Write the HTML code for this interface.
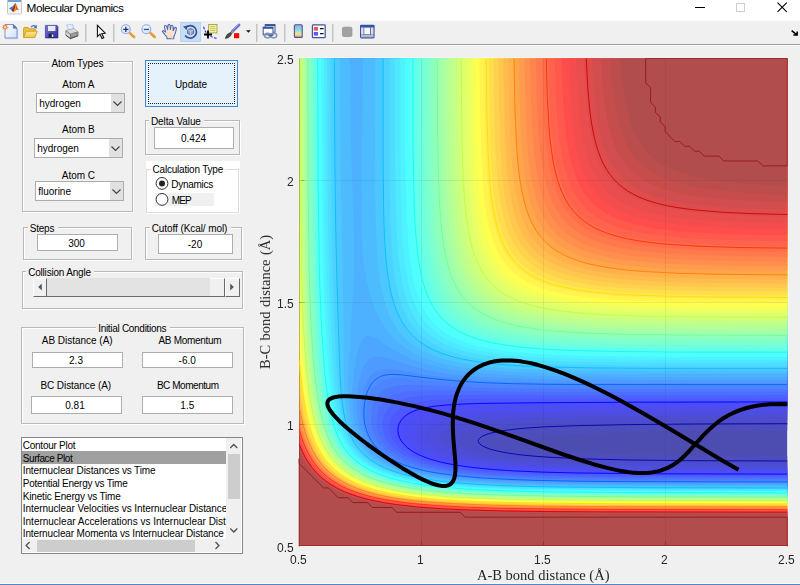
<!DOCTYPE html>
<html><head><meta charset="utf-8"><title>Molecular Dynamics</title>
<style>
html,body{margin:0;padding:0;background:#f0f0f0;}
body{width:800px;height:585px;position:relative;overflow:hidden;font-family:"Liberation Sans",sans-serif;}
.t{position:absolute;white-space:nowrap;}
.pn{position:absolute;box-sizing:border-box;border:1px solid #b8b8b8;box-shadow:1px 1px 0 #fff, inset 1px 1px 0 #fff;}
.ed{position:absolute;background:#fff;border:1px solid #abadb3;}
.pp{position:absolute;background:#fff;border:1px solid #adadad;}
.pb{position:absolute;right:0;top:0;bottom:0;width:13px;background:#e1e1e1;}
.pb svg{position:absolute;left:-1px;top:0}
.ab{position:absolute;}
</style></head><body>
<div class="ab" style="left:0;top:0;width:800px;height:21px;background:#fff"></div>
<svg class="ab" style="left:7px;top:0" width="15" height="15" viewBox="0 0 15 15">
<rect x="0.5" y="-1" width="14" height="15" rx="1" fill="#f4f4f4" stroke="#c4c8d0"/>
<rect x="1" y="0" width="13" height="2" fill="#6fa3d3"/>
<path d="M2 8.3 L5.5 6.4 L8.3 3.2 L9 5.5 L6.2 11.8 L4.6 10.2 Z" fill="#3f7fc4"/>
<path d="M8.4 3.1 C9.6 4.8 10.4 8.5 12 10.4 C10.6 9.6 9.4 9.6 8 11 C7.4 11.6 6.8 12 6.2 11.9 C6.5 9 7.4 5.6 8.4 3.1Z" fill="#e8601c"/>
<path d="M8.4 3.1 C8.9 5 8.6 8.4 6.2 11.9 C5.6 11.4 5 10.8 4.6 10.2 C6.4 8.2 7.6 5.6 8.4 3.1Z" fill="#a5281c"/>
<path d="M8.5 3.5 C9.1 5.4 9.4 8.2 8 11 C7.4 11.6 6.9 11.9 6.4 11.8 C7.9 9 8.6 6 8.5 3.5Z" fill="#f6a21e"/>
</svg>
<div class="t" style="left:26.60px;top:0.40px;font-size:11.8px;line-height:17px;color:#000;font-family:'Liberation Sans',sans-serif;letter-spacing:-0.524px;">Molecular Dynamics</div>
<div class="ab" style="left:695px;top:7px;width:10px;height:1px;background:#000"></div>
<div class="ab" style="left:736px;top:3px;width:7px;height:7px;border:1px solid #cccccc"></div>
<svg class="ab" style="left:776px;top:1px" width="12" height="12" viewBox="0 0 12 12"><path d="M1.5 1.7 L10.8 10.8 M10.8 1.7 L1.5 10.8" stroke="#000" stroke-width="1.1" fill="none"/></svg>
<div class="ab" style="left:0;top:21px;width:800px;height:23px;background:#f0f0f0"></div>
<div class="ab" style="left:0;top:44px;width:800px;height:1px;background:#a0a0a0"></div>
<div class="ab" style="left:0;top:45px;width:800px;height:1px;background:#fafafa"></div>
<div class="ab" style="left:85px;top:24px;width:1px;height:18px;background:#c3c3c3"></div>
<div class="ab" style="left:86px;top:24px;width:1px;height:18px;background:#dcdcdc"></div>
<div class="ab" style="left:113px;top:24px;width:1px;height:18px;background:#c3c3c3"></div>
<div class="ab" style="left:114px;top:24px;width:1px;height:18px;background:#dcdcdc"></div>
<div class="ab" style="left:256px;top:24px;width:1px;height:18px;background:#c3c3c3"></div>
<div class="ab" style="left:257px;top:24px;width:1px;height:18px;background:#dcdcdc"></div>
<div class="ab" style="left:284px;top:24px;width:1px;height:18px;background:#c3c3c3"></div>
<div class="ab" style="left:285px;top:24px;width:1px;height:18px;background:#dcdcdc"></div>
<div class="ab" style="left:332px;top:24px;width:1px;height:18px;background:#c3c3c3"></div>
<div class="ab" style="left:333px;top:24px;width:1px;height:18px;background:#dcdcdc"></div>
<div class="ab" style="left:180px;top:22px;width:20px;height:19px;background:#c5def5;border:1px solid #b2d5f3;box-sizing:border-box;width:21px;height:20px"></div>
<svg class="ab" style="left:0;top:0" width="400" height="46" viewBox="0 0 400 46">
<defs>
<linearGradient id="gpage" x1="0" y1="0" x2="1" y2="1"><stop offset="0" stop-color="#ffffff"/><stop offset="1" stop-color="#cfe0f6"/></linearGradient>
<linearGradient id="gfold" x1="0" y1="0" x2="0" y2="1"><stop offset="0" stop-color="#fbe9a0"/><stop offset="1" stop-color="#f2c53a"/></linearGradient>
<linearGradient id="gsave" x1="0" y1="0" x2="1" y2="1"><stop offset="0" stop-color="#7a78d8"/><stop offset="1" stop-color="#2e2a9a"/></linearGradient>
<linearGradient id="gcb" x1="0" y1="0" x2="0" y2="1"><stop offset="0" stop-color="#a9a4ea"/><stop offset="0.4" stop-color="#86dde0"/><stop offset="0.72" stop-color="#f1e88e"/><stop offset="1" stop-color="#f0a070"/></linearGradient>
<radialGradient id="glens" cx="0.4" cy="0.35" r="0.7"><stop offset="0" stop-color="#f4fbff"/><stop offset="1" stop-color="#bfe4f4"/></radialGradient>
</defs>
<!-- new -->
<path d="M5 24.5 H13.3 L17 28.2 V38 H5 Z" fill="url(#gpage)" stroke="#7f93cc" stroke-width="1"/>
<path d="M13.3 24.5 V28.2 H17 Z" fill="#5e6fb5" stroke="#5e6fb5" stroke-width="0.6"/>
<path d="M5 38.6 H17.6 V28.6" fill="none" stroke="#a9b4d8" stroke-width="1"/>
<path d="M5.2 23.6 L5.9 25.7 L7.8 24.6 L6.9 26.6 L9 27.2 L6.9 27.9 L7.8 29.8 L5.9 28.8 L5.2 30.8 L4.5 28.8 L2.6 29.8 L3.5 27.9 L1.5 27.2 L3.5 26.6 L2.6 24.6 L4.5 25.7Z" fill="#f0784a"/>
<circle cx="5.2" cy="27.2" r="1.3" fill="#f8d860"/>
<!-- open -->
<path d="M23.6 37.4 V28.6 Q23.6 27.4 24.8 27.4 H28 L29.4 28.8 H34.6 Q35.6 28.8 35.6 29.8 V31" fill="#f0c23c" stroke="#c89a28" stroke-width="0.9"/>
<path d="M23.6 37.6 L26.2 31.2 H37.2 L34.8 37.6 Z" fill="url(#gfold)" stroke="#c89a28" stroke-width="0.9"/>
<path d="M31 27.2 Q33.4 24.4 35.8 26.6" fill="none" stroke="#5078c0" stroke-width="1.3"/>
<path d="M36.9 25 L36.6 28.8 L33.6 27.3 Z" fill="#3c64b4"/>
<!-- save -->
<path d="M45.4 25.4 H57 L58 26.4 V38 H45.4 Z" fill="url(#gsave)" stroke="#2a2890" stroke-width="0.6"/>
<rect x="48" y="26" width="7.4" height="5" fill="#e8ecf6"/>
<rect x="48.6" y="33.6" width="5.4" height="4" fill="#20204c"/>
<rect x="51.8" y="34.4" width="1.6" height="2.6" fill="#e0e4f0"/>
<!-- print -->
<path d="M66.5 24.8 L72.6 24.4 L74 28.8 L68.4 30.6 Z" fill="#c4dcfa" stroke="#9ab4e0" stroke-width="0.5"/>
<path d="M67.6 25.4 L71.8 25.2 L72.8 28.4 L68.8 29.6 Z" fill="#e6f0fe"/>
<path d="M65.8 30.6 L68.2 29.9 L73.9 28.4 L78.1 31.9 L70.5 34.2 Z" fill="#dadada" stroke="#8c8c8c" stroke-width="0.5"/>
<path d="M65.8 30.6 L70.5 34.2 V38.6 L65.8 35.2 Z" fill="#c2c2c2" stroke="#6a6a6a" stroke-width="0.6"/>
<path d="M70.5 34.2 L78.1 31.9 V35.7 L70.5 38.6 Z" fill="#9e9e9e" stroke="#5c5c5c" stroke-width="0.6"/>
<path d="M66.4 33 L70 35.8 V36.8 L66.4 34 Z" fill="#f4f4f4"/>
<path d="M65.8 35.2 L70.5 38.6 L78.1 35.7" fill="none" stroke="#4a4a4a" stroke-width="1"/>
<path d="M71.4 37 L73 36.4" stroke="#7a84d8" stroke-width="1"/>
<circle cx="76.2" cy="33.4" r="0.7" fill="#58a858"/>
<!-- pointer -->
<path d="M97.4 25.4 V36.6 L100 34.2 L102 38.6 L103.8 37.8 L101.8 33.6 L105.2 33.2 Z" fill="#fafafa" stroke="#111" stroke-width="1.1" stroke-linejoin="miter"/>
<!-- zoom in -->
<path d="M129.2 32.4 L134.2 37" stroke="#e9a23c" stroke-width="2.6" stroke-linecap="round"/>
<path d="M129.8 33.9 L133.4 37.4" stroke="#c88428" stroke-width="0.7"/>
<circle cx="125.8" cy="29.2" r="4.5" fill="url(#glens)" stroke="#a7a5e4" stroke-width="1.1"/>
<path d="M123.2 29.4 H128.4 M125.8 26.8 V32" stroke="#24307c" stroke-width="1.3"/>
<!-- zoom out -->
<path d="M149.8 32.4 L154.8 37" stroke="#e9a23c" stroke-width="2.6" stroke-linecap="round"/>
<path d="M150.4 33.9 L154 37.4" stroke="#c88428" stroke-width="0.7"/>
<circle cx="146.4" cy="29.2" r="4.5" fill="url(#glens)" stroke="#a7a5e4" stroke-width="1.1"/>
<path d="M143.8 29.4 H149" stroke="#3a4a94" stroke-width="1.3"/>
<!-- pan hand -->
<path d="M167 38.7 V37 L164.6 34.4 L162.5 31.6 Q162.2 30.6 163.4 30.6 L165.6 32 L164.4 27 Q164.4 25.4 165.6 25.5 Q166.5 25.5 166.8 26.8 L167.6 29.4 L168 25.6 Q168.2 24.3 169.2 24.4 Q170.1 24.5 170.2 25.8 L170.4 29.2 L170.9 26.4 Q171.2 25.1 172.2 25.3 Q173.2 25.5 173.1 26.8 L173.2 30.4 L174.5 28 Q175.2 27 176 27.5 Q176.7 28 176.3 29.4 L175.2 33.6 L173.8 36.8 V38.7 Z" fill="#fbe2c6" stroke="#4666c6" stroke-width="1.05" stroke-linejoin="round"/>
<path d="M170 34 L173.6 38.4 H171 Z" fill="#f2cda6"/>
<path d="M167.5 26.5 V30.2 M170.5 26 V30 M173.4 27.4 V31" stroke="#4666c6" stroke-width="0.9" stroke-opacity="0.9"/>
<!-- rotate 3d -->
<path d="M185.6 27.8 A6.2 6.2 0 1 1 185.2 35.4" fill="none" stroke="#3a4c8c" stroke-width="1.7"/>
<path d="M183 26.6 L187.6 25.4 L186.8 30 Z" fill="#3a4c8c"/>
<path d="M190.6 28.6 L193.6 29.8 V33.4 L190.6 34.8 L187.6 33.4 V29.8 Z" fill="#8a9cc8" stroke="#4a5c9c" stroke-width="0.8"/>
<path d="M187.6 29.8 L190.6 31.2 L193.6 29.8 M190.6 31.2 V34.8" fill="none" stroke="#dfe6f4" stroke-width="0.8"/>
<!-- data cursor -->
<path d="M203.6 26.6 Q205 32 208 34.6 Q212 37.6 216.8 38.4" fill="none" stroke="#2a2aff" stroke-width="1.1" stroke-dasharray="2.6 1.4"/>
<rect x="208.6" y="24.5" width="8.4" height="8.4" fill="#f2f2a6" stroke="#a3a33e" stroke-width="0.9"/>
<path d="M210.2 26.6 H215.4 M210.2 28.6 H215.4 M210.2 30.6 H215.4" stroke="#b5b55a" stroke-width="0.8"/>
<path d="M204 34.5 H212 M208 30.6 V38.6" stroke="#000" stroke-width="1.8"/>
<!-- brush -->
<path d="M239 25 L232.2 31.6" stroke="#6a6ed6" stroke-width="2.8" stroke-linecap="round"/>
<path d="M238.4 24.6 L231.8 31" stroke="#a9acec" stroke-width="0.8"/>
<path d="M232.8 30.4 L230.4 32.6 L231.8 33.8 L233.8 31.6Z" fill="#9a9a9a" stroke="#6c6c6c" stroke-width="0.5"/>
<path d="M230.6 32.4 Q226.4 33.6 225.2 38.4 Q229.8 38.6 231.8 33.6 Z" fill="#4a4a4a" stroke="#2c2c2c" stroke-width="0.5"/>
<rect x="234" y="33.2" width="5.2" height="5" fill="#ff0000"/>
<path d="M246 30.2 H250.8 L248.4 32.8 Z" fill="#111"/>
<!-- link -->
<rect x="265.2" y="24.6" width="9.8" height="7.6" fill="#fff" stroke="#3a5296" stroke-width="1"/>
<rect x="265.2" y="24.4" width="9.8" height="1.8" fill="#3a5296"/>
<rect x="263.2" y="27.2" width="9.8" height="7.6" fill="#fdfdfd" stroke="#3a5296" stroke-width="1"/>
<rect x="263.2" y="27" width="9.8" height="1.8" fill="#3a5296"/>
<ellipse cx="267.6" cy="35.6" rx="3.2" ry="2.3" fill="none" stroke="#7c92b6" stroke-width="1.5"/>
<ellipse cx="273.6" cy="35.6" rx="3.2" ry="2.3" fill="none" stroke="#7c92b6" stroke-width="1.5"/>
<path d="M268.6 35.6 H272.8" stroke="#4a5e86" stroke-width="1.4"/>
<!-- colorbar -->
<rect x="294.4" y="24.8" width="7.8" height="12.6" rx="1" fill="url(#gcb)" stroke="#42549a" stroke-width="1.1"/>
<!-- legend -->
<rect x="312.4" y="24.9" width="12.8" height="12.8" rx="0.8" fill="#fafafa" stroke="#42549a" stroke-width="1.2"/>
<rect x="313.8" y="27" width="4.2" height="3.6" fill="#e65a5a"/>
<rect x="313.8" y="32" width="4.2" height="3.6" fill="#5c5cec"/>
<path d="M320 28.6 H323.6 M320 33.6 H323.6" stroke="#111" stroke-width="1.1"/>
<!-- gray square -->
<rect x="342.5" y="27.2" width="9.4" height="9.2" rx="1.2" fill="#a2a2a2" stroke="#939393" stroke-width="0.8"/>
<!-- window -->
<rect x="360.6" y="25.4" width="13.4" height="12.4" rx="0.8" fill="#f7f7f7" stroke="#3452a4" stroke-width="1.2"/>
<rect x="360.4" y="25" width="13.8" height="2.6" fill="#3452a4"/>
<path d="M363.8 27.6 V34.6 M370.6 27.6 V34.6 M361 34.8 H373.6" stroke="#3452a4" stroke-width="0.9"/>
<rect x="361.4" y="35.2" width="11.8" height="1.8" fill="#b8b8b8"/>
<rect x="361.3" y="27.8" width="2" height="6.6" fill="#dcdcdc"/>
<rect x="371.1" y="27.8" width="2" height="6.6" fill="#dcdcdc"/>
</svg>

<div class="pn" style="left:22px;top:61px;width:111px;height:151px;"></div>
<div style="position:absolute;left:49.4px;top:56px;width:57.5px;height:12px;background:#f0f0f0"></div>
<div class="t" style="left:51.40px;top:57.30px;font-size:10px;line-height:14px;color:#000;font-family:'Liberation Sans',sans-serif;letter-spacing:-0.062px;">Atom Types</div>
<div class="t" style="left:62.28px;top:78.10px;font-size:10px;line-height:14px;color:#000;font-family:'Liberation Sans',sans-serif;letter-spacing:0.000px;">Atom A</div>
<div class="pp" style="left:36px;top:93px;width:87px;height:18px"><div class="pb"><svg width="15" height="18" viewBox="0 0 15 18"><path d="M3.5 7.5 L7.5 11.5 L11.5 7.5" fill="none" stroke="#444" stroke-width="1.2"/></svg></div></div><div class="t" style="left:39.20px;top:97.30px;font-size:10px;line-height:14px;color:#000;font-family:'Liberation Sans',sans-serif;letter-spacing:0.000px;">hydrogen</div>
<div class="t" style="left:62.01px;top:123.10px;font-size:10px;line-height:14px;color:#000;font-family:'Liberation Sans',sans-serif;letter-spacing:0.000px;">Atom B</div>
<div class="pp" style="left:34px;top:138px;width:87px;height:18px"><div class="pb"><svg width="15" height="18" viewBox="0 0 15 18"><path d="M3.5 7.5 L7.5 11.5 L11.5 7.5" fill="none" stroke="#444" stroke-width="1.2"/></svg></div></div><div class="t" style="left:37.20px;top:142.30px;font-size:10px;line-height:14px;color:#000;font-family:'Liberation Sans',sans-serif;letter-spacing:0.000px;">hydrogen</div>
<div class="t" style="left:61.73px;top:168.60px;font-size:10px;line-height:14px;color:#000;font-family:'Liberation Sans',sans-serif;letter-spacing:0.000px;">Atom C</div>
<div class="pp" style="left:35px;top:181px;width:87px;height:18px"><div class="pb"><svg width="15" height="18" viewBox="0 0 15 18"><path d="M3.5 7.5 L7.5 11.5 L11.5 7.5" fill="none" stroke="#444" stroke-width="1.2"/></svg></div></div><div class="t" style="left:38.20px;top:185.30px;font-size:10px;line-height:14px;color:#000;font-family:'Liberation Sans',sans-serif;letter-spacing:0.000px;">fluorine</div>
<div class="ab" style="left:145px;top:60px;width:91px;height:45px;border:1px solid #3c8ad8;background:#e5f1fb"><div style="position:absolute;left:2px;top:2px;right:2px;bottom:2px;border:1px dotted #222"></div></div>
<div class="t" style="left:174.88px;top:78.10px;font-size:10px;line-height:14px;color:#000;font-family:'Liberation Sans',sans-serif;letter-spacing:0.000px;">Update</div>
<div class="pn" style="left:145px;top:120px;width:95px;height:35px;"></div>
<div style="position:absolute;left:149.0px;top:115px;width:55.3px;height:12px;background:#f0f0f0"></div>
<div class="t" style="left:151.00px;top:115.30px;font-size:10px;line-height:14px;color:#000;font-family:'Liberation Sans',sans-serif;letter-spacing:-0.105px;">Delta Value</div>
<div class="ed" style="left:154px;top:127px;width:78px;height:20px"></div><div class="t" style="left:180.99px;top:132.30px;font-size:10px;line-height:14px;color:#000;font-family:'Liberation Sans',sans-serif;letter-spacing:0.000px;">0.424</div>
<div class="ab" style="left:146px;top:161px;width:94px;height:53px;background:#fff"></div>
<div class="ab" style="left:155px;top:193px;width:59px;height:13px;background:#f0f0f0"></div>
<div class="pn" style="left:146px;top:169px;width:93px;height:44px;box-shadow:none;border-color:#dcdcdc"></div>
<div class="ab" style="left:150.5px;top:163px;width:74px;height:12px;background:#fff"></div>
<div class="t" style="left:152.50px;top:162.80px;font-size:10px;line-height:14px;color:#000;font-family:'Liberation Sans',sans-serif;letter-spacing:-0.203px;">Calculation Type</div>
<svg class="ab" style="left:155px;top:176px" width="14" height="30" viewBox="0 0 14 30"><circle cx="7" cy="7.4" r="5.9" fill="#fff" stroke="#333" stroke-width="1"/><circle cx="7" cy="7.4" r="3" fill="#222"/><circle cx="7" cy="23.4" r="5.9" fill="#fff" stroke="#333" stroke-width="1"/></svg>
<div class="t" style="left:171.30px;top:177.80px;font-size:10px;line-height:14px;color:#000;font-family:'Liberation Sans',sans-serif;letter-spacing:-0.275px;">Dynamics</div>
<div class="t" style="left:171.70px;top:193.80px;font-size:10px;line-height:14px;color:#000;font-family:'Liberation Sans',sans-serif;letter-spacing:-0.890px;">MEP</div>
<div class="pn" style="left:23px;top:227px;width:109px;height:33px;"></div>
<div style="position:absolute;left:27.8px;top:222px;width:29.9px;height:12px;background:#f0f0f0"></div>
<div class="t" style="left:29.80px;top:222.40px;font-size:10px;line-height:14px;color:#000;font-family:'Liberation Sans',sans-serif;letter-spacing:-0.234px;">Steps</div>
<div class="ed" style="left:37px;top:234px;width:79px;height:15px"></div><div class="t" style="left:68.16px;top:236.80px;font-size:10px;line-height:14px;color:#000;font-family:'Liberation Sans',sans-serif;letter-spacing:0.000px;">300</div>
<div class="pn" style="left:145px;top:227px;width:97px;height:33px;"></div>
<div style="position:absolute;left:149.7px;top:222px;width:81.1px;height:12px;background:#f0f0f0"></div>
<div class="t" style="left:151.70px;top:222.00px;font-size:10px;line-height:14px;color:#000;font-family:'Liberation Sans',sans-serif;letter-spacing:-0.081px;">Cutoff (Kcal/ mol)</div>
<div class="ed" style="left:158px;top:234px;width:73px;height:18px"></div><div class="t" style="left:187.77px;top:238.30px;font-size:10px;line-height:14px;color:#000;font-family:'Liberation Sans',sans-serif;letter-spacing:0.000px;">-20</div>
<div class="pn" style="left:22px;top:271px;width:221px;height:38px;"></div>
<div style="position:absolute;left:26.2px;top:266px;width:68.1px;height:12px;background:#f0f0f0"></div>
<div class="t" style="left:28.20px;top:266.30px;font-size:10px;line-height:14px;color:#000;font-family:'Liberation Sans',sans-serif;letter-spacing:-0.200px;">Collision Angle</div>
<div class="ab" style="left:33px;top:278px;width:207px;height:19px;background:#e3e3e3;border-bottom:1px solid #696969;box-sizing:border-box"></div>
<div class="ab" style="left:33px;top:278px;width:14px;height:19px;background:#f0f0f0;border-right:1px solid #696969;border-bottom:1px solid #696969;border-left:1px solid #fff;border-top:1px solid #fff;box-sizing:border-box"></div>
<div class="ab" style="left:210px;top:278px;width:15px;height:19px;background:#f0f0f0;border-right:1px solid #696969;border-bottom:1px solid #696969;border-top:1px solid #fff;box-sizing:border-box"></div>
<div class="ab" style="left:225px;top:278px;width:15px;height:19px;background:#f0f0f0;border-right:1px solid #696969;border-bottom:1px solid #696969;border-left:1px solid #fff;border-top:1px solid #fff;box-sizing:border-box"></div>
<svg class="ab" style="left:33px;top:278px" width="207" height="19" viewBox="0 0 207 19"><path d="M8.8 5.5 L5.2 9 L8.8 12.5Z M197.2 5.5 L200.8 9 L197.2 12.5Z" fill="#555"/></svg>
<div class="pn" style="left:21px;top:327px;width:223px;height:97px;"></div>
<div style="position:absolute;left:96.2px;top:322px;width:73.5px;height:12px;background:#f0f0f0"></div>
<div class="t" style="left:98.20px;top:321.60px;font-size:10px;line-height:14px;color:#000;font-family:'Liberation Sans',sans-serif;letter-spacing:-0.299px;">Initial Conditions</div>
<div class="t" style="left:41.76px;top:334.10px;font-size:10px;line-height:14px;color:#000;font-family:'Liberation Sans',sans-serif;letter-spacing:-0.016px;">AB Distance (A)</div>
<div class="t" style="left:158.51px;top:334.10px;font-size:10px;line-height:14px;color:#000;font-family:'Liberation Sans',sans-serif;letter-spacing:-0.312px;">AB Momentum</div>
<div class="ed" style="left:32px;top:352px;width:89px;height:14px"></div><div class="t" style="left:69.05px;top:354.30px;font-size:10px;line-height:14px;color:#000;font-family:'Liberation Sans',sans-serif;letter-spacing:0.000px;">2.3</div>
<div class="ed" style="left:142px;top:352px;width:89px;height:14px"></div><div class="t" style="left:178.58px;top:354.30px;font-size:10px;line-height:14px;color:#000;font-family:'Liberation Sans',sans-serif;letter-spacing:0.000px;">-6.0</div>
<div class="t" style="left:40.38px;top:379.10px;font-size:10px;line-height:14px;color:#000;font-family:'Liberation Sans',sans-serif;letter-spacing:-0.066px;">BC Distance (A)</div>
<div class="t" style="left:156.88px;top:379.10px;font-size:10px;line-height:14px;color:#000;font-family:'Liberation Sans',sans-serif;letter-spacing:-0.453px;">BC Momentum</div>
<div class="ed" style="left:31px;top:396px;width:89px;height:16px"></div><div class="t" style="left:65.27px;top:399.30px;font-size:10px;line-height:14px;color:#000;font-family:'Liberation Sans',sans-serif;letter-spacing:0.000px;">0.81</div>
<div class="ed" style="left:142px;top:396px;width:89px;height:16px"></div><div class="t" style="left:180.35px;top:399.30px;font-size:10px;line-height:14px;color:#000;font-family:'Liberation Sans',sans-serif;letter-spacing:0.000px;">1.5</div>
<div class="ab" style="left:21px;top:437px;width:220px;height:115px;background:#fff;border:1px solid #828790"></div>
<div class="ab" style="left:22px;top:451px;width:204px;height:12.5px;background:#a0a0a0"></div>
<div class="ab" style="left:22px;top:438px;width:204px;height:101px;overflow:hidden">
<div class="t" style="left:0.80px;top:1.20px;font-size:10px;line-height:14px;color:#000;font-family:'Liberation Sans',sans-serif;letter-spacing:-0.257px;">Contour Plot</div>
<div class="t" style="left:0.80px;top:13.80px;font-size:10px;line-height:14px;color:#000;font-family:'Liberation Sans',sans-serif;letter-spacing:-0.415px;">Surface Plot</div>
<div class="t" style="left:0.80px;top:26.40px;font-size:10px;line-height:14px;color:#000;font-family:'Liberation Sans',sans-serif;letter-spacing:-0.137px;">Internuclear Distances vs Time</div>
<div class="t" style="left:0.80px;top:39.00px;font-size:10px;line-height:14px;color:#000;font-family:'Liberation Sans',sans-serif;letter-spacing:-0.246px;">Potential Energy vs Time</div>
<div class="t" style="left:0.80px;top:51.60px;font-size:10px;line-height:14px;color:#000;font-family:'Liberation Sans',sans-serif;letter-spacing:-0.178px;">Kinetic Energy vs Time</div>
<div class="t" style="left:0.80px;top:64.20px;font-size:10px;line-height:14px;color:#000;font-family:'Liberation Sans',sans-serif;letter-spacing:-0.071px;">Internuclear Velocities vs Internuclear Distance</div>
<div class="t" style="left:0.80px;top:76.80px;font-size:10px;line-height:14px;color:#000;font-family:'Liberation Sans',sans-serif;letter-spacing:-0.008px;">Internuclear Accelerations vs Internuclear Distance</div>
<div class="t" style="left:0.80px;top:89.40px;font-size:10px;line-height:14px;color:#000;font-family:'Liberation Sans',sans-serif;letter-spacing:-0.141px;">Internuclear Momenta vs Internuclear Distance</div>
</div>
<div class="ab" style="left:226px;top:438px;width:15px;height:114px;background:#f0f0f0"></div>
<div class="ab" style="left:228px;top:454px;width:12px;height:45px;background:#cdcdcd"></div>
<svg class="ab" style="left:226px;top:438px" width="15" height="101" viewBox="0 0 15 101"><path d="M4.3 10 L7.8 6.5 L11.3 10 M4.3 90.5 L7.8 94 L11.3 90.5" fill="none" stroke="#505050" stroke-width="1.3"/></svg>
<div class="ab" style="left:22px;top:539px;width:204px;height:13px;background:#f0f0f0"></div>
<div class="ab" style="left:37px;top:540px;width:158px;height:12px;background:#cdcdcd"></div>
<svg class="ab" style="left:22px;top:539px" width="204" height="13" viewBox="0 0 204 13"><path d="M7.6 3 L4.1 6.5 L7.6 10 M193.5 3 L197 6.5 L193.5 10" fill="none" stroke="#505050" stroke-width="1.3"/></svg>
<svg class="ab" style="left:0;top:0" width="800" height="585" viewBox="0 0 800 585">
<defs><clipPath id="axclip"><rect x="299" y="58" width="489" height="488"/></clipPath></defs>
<rect x="299" y="57.6" width="489.4" height="489.4" fill="#f7f7f7"/>
<g clip-path="url(#axclip)">
<rect x="299.2" y="58.5" width="488" height="488" fill="#4d4db1"/>
<path fill="#4d4dbc" fill-rule="evenodd" d="M299.2 546.5l488 0l0 -90.8l-70.8 -0.3l-51.2 -0.5l-46.4 -1l-30.5 -1.3l-20.7 -1.4l-11 -1.1l-9 -1.2l-6.6 -1.2l-4.8 -1.2l-3.2 -1.3l-2 -1.2l-0.6 -1.2l0.5 -1.2l1.3 -0.9l3.7 -1.5l5.3 -1.3l5.7 -0.9l17 -1.9l25.7 -1.6l30.5 -1.1l40.2 -0.8l54.9 -0.6l72 -0.3l0 -372.2l-488 0l0 488z"/>
<path fill="#4d4dc7" fill-rule="evenodd" d="M299.2 546.5l488 0l0 -86.2l-93.9 -0.4l-58.6 -0.6l-45.1 -1.1l-20.7 -0.8l-15.9 -0.8l-17.1 -1.3l-12.2 -1.3l-10.7 -1.4l-8.8 -1.7l-8.1 -2l-6.4 -2.4l-2.2 -1.3l-1.5 -1.2l-1 -1.2l-0.4 -1.2l0.1 -1.2l0.7 -1.3l1.4 -1.2l2 -1.2l5.6 -2.1l6.1 -1.6l7.3 -1.3l11 -1.4l11 -1.1l15.8 -1.1l34.2 -1.4l47.6 -1l65.9 -0.6l93.9 -0.4l0 -366.2l-488 0l0 488z"/>
<path fill="#4d4dd2" fill-rule="evenodd" d="M299.2 546.5l488 0l0 -82.9l-102.5 -0.3l-69.5 -0.8l-51.3 -1.3l-34.1 -1.9l-17.1 -1.5l-13.1 -1.6l-14.2 -2.4l-9.8 -2.5l-7 -2.4l-2.6 -1.2l-4.1 -2.5l-2.4 -2.4l-0.7 -1.2l-0.4 -1.2l0 -1.3l0.3 -1.2l1.5 -2.1l1.9 -1.5l1.8 -1.1l6.1 -2.6l6.1 -1.7l9.8 -1.9l9.5 -1.3l12.4 -1.2l17.1 -1.2l35.4 -1.5l51.2 -1l70.8 -0.6l104.9 -0.3l0 -361.4l-488 0l0 488z"/>
<path fill="#4d4dde" fill-rule="evenodd" d="M299.2 546.5l488 0l0 -80.1l-114.7 -0.4l-69.5 -0.8l-26.9 -0.5l-25.6 -0.9l-20.7 -1.1l-15.9 -1.1l-17.7 -1.7l-15.2 -2.2l-13.4 -2.7l-8.6 -2.4l-3.6 -1.3l-5.4 -2.4l-2.2 -1.2l-3.5 -2.5l-1.4 -1.2l-1.9 -2.4l-0.5 -1.2l-0.5 -2.5l0.5 -2.4l0.6 -1.2l1 -1.3l2.3 -2l2.5 -1.6l2.5 -1.2l6.8 -2.5l8.9 -2.1l9.8 -1.6l12.2 -1.4l15.8 -1.3l17.1 -0.9l20.8 -0.8l52.4 -1l75.8 -0.6l118.2 -0.4l0 -357.1l-488 0l0 488z"/>
<path fill="#4d4de9" fill-rule="evenodd" d="M299.2 546.5l488 0l0 -77.8l-118.3 -0.3l-76.9 -0.9l-26.8 -0.6l-26.2 -0.9l-22.3 -1.2l-15.7 -1.3l-15.1 -1.6l-14.7 -2.1l-12.2 -2.5l-6.1 -1.6l-6.1 -1.9l-8.6 -3.7l-5.9 -3.6l-2.7 -2.5l-2 -2.4l-1.2 -2.5l-0.5 -2.4l0.2 -2.4l0.4 -1.3l1.3 -2.4l1.9 -2.1l2 -1.6l2.9 -1.7l6.1 -2.6l7.3 -2.2l10.3 -2l11.7 -1.5l15.9 -1.4l17 -1l20.8 -0.7l54.9 -1.1l80.5 -0.6l128.1 -0.4l0 -353.2l-488 0l0 488z"/>
<path fill="#4d4df4" fill-rule="evenodd" d="M299.2 546.5l488 0l0 -75.7l-124.4 -0.3l-77 -0.9l-30.4 -0.7l-24.4 -0.9l-22 -1.3l-19.5 -1.6l-17.1 -2l-14.6 -2.5l-13 -3.2l-10.6 -3.6l-7.4 -3.7l-3.8 -2.4l-2.9 -2.5l-2.3 -2.4l-1.6 -2.4l-1.1 -2.5l-0.7 -3.6l0.3 -2.5l0.8 -2.4l0.8 -1.5l1.8 -2.2l1.9 -1.8l2.6 -1.8l5.9 -3l7.3 -2.4l9.8 -2.1l12.2 -1.6l14.6 -1.3l15.9 -0.9l20.7 -0.8l56.2 -1l86.6 -0.6l135.4 -0.3l0 -349.6l-488 0l0 488z"/>
<path fill="#4d4dff" fill-rule="evenodd" d="M299.2 546.5l488 0l0 -73.8l-133 -0.4l-78.1 -0.9l-28 -0.7l-27.3 -1.1l-20.3 -1.2l-19.5 -1.7l-18.3 -2.4l-15.9 -3l-6.1 -1.5l-7.3 -2.3l-9.5 -3.7l-4.6 -2.5l-3.8 -2.4l-3.1 -2.4l-2.5 -2.5l-1.9 -2.4l-2 -3.7l-0.8 -2.4l-0.4 -3.7l0.2 -2.4l0.7 -2.5l1.3 -2.4l1.8 -2.4l2.6 -2.5l1.6 -1.2l5.8 -3.1l7.3 -2.6l8.5 -1.9l11 -1.6l13.4 -1.3l14.7 -0.8l19.5 -0.7l54.9 -0.9l92.7 -0.6l146.4 -0.3l0 -346.1l-488 0l0 488z"/>
<path fill="#4d58ff" fill-rule="evenodd" d="M299.2 546.5l488 0l0 -72l-135.4 -0.4l-80.5 -0.9l-33 -0.9l-25.6 -1.1l-23.1 -1.6l-17.2 -1.6l-17 -2.4l-8.6 -1.6l-7.6 -1.7l-12.5 -3.6l-6.3 -2.5l-5.1 -2.4l-4.3 -2.5l-3.4 -2.4l-2.9 -2.4l-3.4 -3.7l-1.7 -2.4l-1.8 -3.7l-1.1 -3.7l-0.3 -3.6l0.2 -2.5l0.6 -2.4l1 -2.4l1.5 -2.5l2 -2.4l2.4 -2.2l4.9 -3.2l6.1 -2.5l8.5 -2.3l11 -1.8l12.2 -1.1l13.4 -0.8l15.9 -0.5l51.2 -0.7l105 -0.5l154.9 -0.3l0 -342.8l-488 0l0 488z"/>
<path fill="#4d63ff" fill-rule="evenodd" d="M299.2 546.5l488 0l0 -70.4l-141.5 -0.4l-46.4 -0.4l-37.8 -0.7l-30.5 -0.8l-25.6 -1.2l-23.2 -1.7l-17.1 -1.7l-9.7 -1.4l-9.8 -1.6l-6.9 -1.4l-7.7 -1.9l-6.1 -1.8l-6.8 -2.4l-5.7 -2.5l-4.6 -2.4l-3.9 -2.5l-4.7 -3.6l-2.5 -2.5l-2.9 -3.6l-2.2 -3.7l-1.5 -3.6l-0.8 -3.7l-0.2 -3.7l0.3 -3.6l0.6 -2.5l1 -2.4l1.3 -2.4l1.8 -2.5l1.5 -1.6l2.3 -2l2.6 -1.8l2.4 -1.4l3.7 -1.6l7.3 -2.2l8.5 -1.6l12.2 -1.3l20.8 -0.8l34.1 -0.5l297.7 -0.6l0 -339.6l-488 0l0 488z"/>
<path fill="#4d6eff" fill-rule="evenodd" d="M299.2 546.5l488 0l0 -69l-147.6 -0.3l-43.9 -0.4l-37.9 -0.7l-30.5 -0.8l-26.8 -1.3l-23.2 -1.7l-18.3 -2l-11 -1.6l-8.4 -1.5l-7.4 -1.6l-7.9 -2.1l-7.5 -2.4l-5.4 -2.1l-5.9 -2.8l-3.8 -2.1l-4.1 -2.8l-4.4 -3.6l-3.4 -3.7l-2.7 -3.6l-2 -3.7l-1.4 -3.7l-0.8 -3.6l-0.4 -4.9l0.2 -3.7l0.5 -2.4l1.1 -3.7l1.2 -2.4l1.5 -2.6l1.9 -2.3l4.1 -3.6l5 -2.9l3.7 -1.5l3.6 -1.1l7.4 -1.5l9.7 -1.1l12.2 -0.6l17.1 -0.2l104.9 0.3l230.6 -0.2l0 -336.5l-488 0l0 488z"/>
<path fill="#4d79ff" fill-rule="evenodd" d="M299.2 546.5l488 0l0 -67.6l-151.3 -0.4l-45.1 -0.4l-39.1 -0.6l-31.7 -1l-26.8 -1.3l-23.2 -1.9l-18.3 -2.1l-17.1 -2.9l-9.7 -2.3l-6.1 -1.7l-5.9 -2l-6.3 -2.5l-5 -2.4l-6.2 -3.6l-4.9 -3.7l-3.5 -3.2l-3.4 -4.1l-2.4 -3.7l-1.9 -3.6l-1.6 -4.9l-0.8 -3.7l-0.4 -4.8l0.4 -6.1l0.5 -2.5l1.2 -3.6l1.1 -2.6l2.1 -3.5l2 -2.5l2 -2l2.5 -1.9l2.4 -1.5l2.4 -1.2l3.7 -1.3l7.3 -1.7l8.6 -1l8.5 -0.4l11 0l64.6 1.3l57.4 0.4l233 -0.1l0 -333.4l-488 0l0 488z"/>
<path fill="#4d84ff" fill-rule="evenodd" d="M299.2 546.5l488 0l0 -66.2l-154.9 -0.4l-48.8 -0.5l-36.6 -0.7l-31.8 -1l-26.8 -1.4l-22.5 -1.8l-19.9 -2.4l-8.8 -1.5l-9.8 -2l-6.1 -1.5l-8.2 -2.3l-6.7 -2.5l-5.7 -2.4l-5 -2.7l-5.5 -3.4l-4.6 -3.7l-3.7 -3.6l-3 -3.7l-3 -4.9l-2.2 -4.9l-1.5 -4.8l-0.8 -4.9l-0.3 -4.9l0.1 -3.7l0.5 -3.6l0.8 -3.7l1.1 -3.6l2.6 -5.3l1.3 -2.1l2.3 -2.7l2.5 -2.2l2.4 -1.7l4.9 -2.4l6.1 -1.6l7.3 -0.9l6.1 -0.2l7.3 0.1l59.8 2.7l25.6 0.7l30.5 0.4l75.7 0.4l179.3 -0.1l0 -330.4l-488 0l0 488z"/>
<path fill="#4d8fff" fill-rule="evenodd" d="M299.2 546.5l488 0l0 -65l-158.6 -0.4l-50 -0.5l-36.6 -0.7l-33 -1l-26.8 -1.5l-22 -1.9l-19.5 -2.6l-8.5 -1.4l-8.7 -1.9l-9.4 -2.4l-7.5 -2.4l-6.2 -2.5l-5.2 -2.4l-5.7 -3.3l-4.9 -3.4l-4.9 -4.2l-3.4 -3.8l-2.6 -3.6l-2.8 -4.9l-2.1 -4.9l-1.4 -4.9l-1.1 -6.1l-0.4 -6.1l0.4 -7.3l1.4 -7.3l2.3 -6.4l1.7 -3.4l1.9 -2.8l3.7 -3.9l2.4 -1.8l2.3 -1.2l5 -1.7l6.1 -0.9l6.1 -0.2l7.4 0.4l36.6 3.5l23.1 1.6l23.2 1.1l28.1 0.8l35.4 0.5l45.1 0.2l189.1 0l0 -327.4l-488 0l0 488z"/>
<path fill="#4d9bff" fill-rule="evenodd" d="M299.2 546.5l488 0l0 -63.8l-164.7 -0.4l-47.6 -0.5l-40.2 -0.8l-33 -1.2l-27.2 -1.6l-22.8 -2.2l-18.3 -2.7l-8.5 -1.6l-8.8 -2.1l-8.4 -2.4l-6.9 -2.4l-6.4 -2.8l-6.3 -3.3l-5.6 -3.7l-4 -3.3l-4.1 -4l-3.9 -4.9l-3 -4.9l-2.2 -4.9l-1.7 -4.8l-1.4 -6.1l-0.8 -6.1l-0.3 -6.1l0.4 -7.4l1.3 -8.5l2 -7.3l2.7 -6.2l1.4 -2.4l2.3 -2.9l3.6 -3.1l2.5 -1.4l2.4 -0.8l4.9 -0.9l4.9 0l6.1 0.6l32.9 5.7l22 2.8l24.4 2l29.3 1.4l36.6 0.9l47.5 0.5l198.9 0.1l0 -324.5l-488 0l0 488z"/>
<path fill="#4da6ff" fill-rule="evenodd" d="M299.2 546.5l488 0l0 -62.7l-168.4 -0.4l-48.8 -0.5l-40.2 -0.8l-33 -1.3l-25.6 -1.6l-23.2 -2.2l-19.5 -3l-9.4 -1.9l-9.6 -2.5l-7.6 -2.4l-6.4 -2.4l-6 -2.9l-5.8 -3.2l-5.3 -3.7l-4.8 -4.2l-4 -4.3l-3.6 -4.9l-2.7 -4.9l-2.6 -6.1l-1.8 -6.1l-1.2 -6.1l-0.8 -7.3l-0.2 -7.3l0.4 -9.8l1.1 -8.5l2 -9l2.4 -7.3l2.5 -4.9l1.4 -2l2.2 -2.5l1.5 -1.2l2.2 -1.1l2.4 -0.7l2.5 -0.3l3.6 0.3l4.9 1l28.1 8.8l9.7 2.5l11 2.3l12.2 2l13.4 1.7l14.7 1.3l15.8 1.1l37.9 1.5l50 0.8l69.5 0.3l139.1 -0.1l0 -321.5l-488 0l0 488z"/>
<path fill="#4db1ff" fill-rule="evenodd" d="M299.2 546.5l488 0l0 -61.6l-173.2 -0.4l-48.8 -0.5l-40.3 -0.9l-32.2 -1.3l-27.6 -1.8l-21.9 -2.3l-11 -1.6l-9 -1.6l-10.5 -2.3l-7.4 -2.1l-8.5 -2.8l-6 -2.5l-7.2 -3.7l-5.8 -3.7l-4.7 -3.6l-4.4 -4.3l-3.6 -4.3l-3.7 -5.7l-2.6 -5.2l-2.3 -6.1l-1.7 -6.1l-1.3 -7.4l-0.9 -8.5l-0.2 -8.5l0.3 -12.2l1.2 -12.2l1.6 -11l2.3 -10.5l2.4 -7.5l2.4 -4.8l1.3 -1.5l1.2 -1.1l1.2 -0.7l2.4 -0.5l1.3 0.1l2.4 0.7l3.7 1.8l15.7 10.6l9.9 5.6l8.7 4.1l8.4 3.2l10.9 3.4l13.5 3.1l14.6 2.4l15.9 1.9l17 1.4l20.8 1.2l24.4 0.8l28 0.6l73.2 0.5l150.1 0.1l0 -318.7l-488 0l0 488z"/>
<path fill="#4dbcff" fill-rule="evenodd" d="M299.2 546.5l488 0l0 -60.5l-139.1 -0.3l-79.3 -0.6l-31.7 -0.6l-25.6 -0.7l-22 -1l-20.7 -1.3l-19.5 -1.8l-15.9 -2l-14.6 -2.6l-12.5 -3l-11.3 -3.7l-9.2 -3.9l-8.2 -4.6l-3.5 -2.5l-4.1 -3.3l-5.2 -5.2l-3.7 -4.9l-3.7 -6.1l-2.8 -6.1l-2.4 -7.3l-1.7 -7.3l-1.2 -8.6l-0.8 -9.7l-0.4 -13.4l0.4 -14.7l4.6 -80.5l0.6 -17.1l0.3 -17.1l-0.3 -26.8l-2 -61.8l-0.8 -33.4l-1.1 -75.6l-50.6 0l0 488zM548.4 373.3l33.8 0.5l44 0.4l161 0.1l0 -315.8l-424 0l-1.7 145.2l0.1 24.4l0.8 18.3l0.9 11l1.3 10.9l2.2 12.2l2.2 9.8l2.8 9.8l2.7 7.3l3.2 7.3l3.8 7.3l4.8 7.3l4.9 6.1l6 6.1l5.7 4.7l6.1 4.1l7.3 4l8.6 3.7l8.7 3.1l9.6 2.6l10.7 2.2l11.2 1.9l13.4 1.6l14.7 1.4l15.8 1l18.3 0.8l21.1 0.7z"/>
<path fill="#4dc7ff" fill-rule="evenodd" d="M299.2 546.5l488 0l0 -59.5l-141.5 -0.3l-79.3 -0.6l-32.3 -0.6l-25.1 -0.7l-23.1 -1.1l-19.6 -1.2l-19.5 -1.8l-14.6 -1.9l-14.7 -2.6l-12.4 -2.9l-11.5 -3.7l-9 -3.7l-4.6 -2.4l-4.1 -2.4l-3.6 -2.4l-4.6 -3.7l-4.9 -4.9l-4.8 -6.1l-3.6 -6.1l-2.7 -6.1l-2.5 -7.3l-2 -8.5l-1.5 -9.8l-0.9 -9.8l-0.9 -20.7l-0.5 -64.7l-2.5 -125.6l-0.6 -54.9l-0.4 -72l-40.7 0l0 488zM579.9 370.8l70.7 0.5l136.6 0.1l0 -312.9l-411.9 0l-0.2 91.5l0.1 46.4l0.8 34.1l1.4 26.9l1.2 12.2l1.4 10.9l1.8 9.8l2 8.5l2.2 7.4l2.7 7.3l3.5 7.3l3.6 6.1l4.5 6.1l5 5.4l6.1 5.3l6.1 4.2l7.4 4l7.3 3.3l9.7 3.3l9.5 2.6l10.1 2.1l12.2 1.9l12.2 1.5l14.6 1.3l15.9 1l18.3 0.9l45.2 1z"/>
<path fill="#4dd2ff" fill-rule="evenodd" d="M299.2 546.5l488 0l0 -58.5l-140.3 -0.3l-83 -0.7l-30.5 -0.5l-26.8 -0.8l-23.2 -1l-18.3 -1.2l-18.3 -1.7l-17.1 -2.1l-15.1 -2.7l-11.7 -2.8l-11 -3.5l-5.7 -2.3l-5.3 -2.4l-4.5 -2.5l-4 -2.4l-6.4 -4.9l-5.1 -4.9l-4.9 -6.1l-3.7 -6.1l-3.4 -7.3l-2.8 -8.5l-2 -8.6l-1.7 -10.9l-1.2 -12.2l-0.9 -14.7l-0.8 -20.3l-2.5 -78.9l-1 -42.3l-1 -75.6l-0.5 -101.3l-35.3 0l0 488zM639.2 368.4l148 0.1l0 -310l-404.3 0l-0.1 90.3l0.4 48.8l1 35.4l0.7 14.6l1.1 13.4l1.3 12.2l1.7 11l2.1 9.8l2.3 8.5l3 8.5l3.4 7.4l3.5 6.1l4.5 6.1l5.6 6.1l5.8 4.8l6.9 4.7l7.3 3.8l8.5 3.5l8.6 2.8l9.7 2.5l12.2 2.3l12.2 1.8l14.7 1.5l15.8 1.2l17.1 0.9l43.9 1.3l63.1 0.6z"/>
<path fill="#4ddeff" fill-rule="evenodd" d="M299.2 546.5l488 0l0 -57.6l-144 -0.3l-82.9 -0.6l-56.1 -1.4l-24.4 -1.1l-18.3 -1.2l-18.3 -1.7l-15.9 -2.1l-14.6 -2.6l-13.6 -3.4l-11 -3.6l-9.6 -4.3l-3.7 -1.9l-4.8 -3.1l-7 -5.4l-5.9 -6.1l-4.6 -6.1l-4 -7.3l-3.1 -7.3l-2.6 -8.6l-2.1 -9.9l-1.8 -12l-1.3 -13.4l-1.4 -22l-1.6 -33.9l-1.4 -35.6l-1.1 -40.3l-1.2 -79.8l-0.5 -115.4l-31.2 0l0 488zM573.6 364.7l73.3 0.8l140.3 0.2l0 -307.2l-398 0l0 80.5l0.4 47.6l0.8 35.4l1.4 26.8l1 12.2l1.3 11l1.8 11l1.8 8.5l2.3 8.6l2.6 7.3l2.6 6.1l3.2 6.1l4.1 6.1l4 4.9l4.9 4.8l6.2 4.9l5.8 3.7l7.3 3.7l8.6 3.4l8.5 2.7l9.8 2.4l10.9 2l11 1.6l13.4 1.5l14.7 1.2l15.8 0.9l40.2 1.3z"/>
<path fill="#4de9ff" fill-rule="evenodd" d="M299.2 546.5l488 0l0 -56.7l-141.5 -0.2l-81.8 -0.7l-57.3 -1.2l-22.7 -1l-21.2 -1.3l-18.3 -1.6l-17.1 -2.2l-14.6 -2.5l-14.2 -3.4l-11.3 -3.6l-9.9 -4.3l-8.6 -4.9l-7.2 -5.5l-6.1 -6.1l-4.6 -6.1l-4.2 -7.3l-3.6 -8.5l-2.6 -8.6l-2.4 -10.9l-2.1 -13.5l-1.5 -14.6l-1.7 -24.4l-1.8 -33.1l-1.2 -30.5l-1.1 -37.7l-1.1 -80.5l-0.5 -117.1l-27.8 0l0 488zM607.5 362.3l65 0.4l114.7 0.1l0 -304.3l-392.3 0l0 80.5l0.5 48.8l0.9 35.4l0.7 14.6l1 13.5l1.2 12.2l1.6 10.9l1.7 9.8l2.4 9.8l2.7 8.5l3 7.3l3.1 6.1l3.8 6l4.9 6.1l5.1 5l5.9 4.6l6.3 3.9l7.4 3.7l8.3 3.2l8.5 2.7l9.8 2.3l10.9 2l12.2 1.8l13.5 1.4l14.6 1.1l35.4 1.6l47.2 1z"/>
<path fill="#4df4ff" fill-rule="evenodd" d="M299.2 546.5l488 0l0 -55.8l-145.2 -0.3l-81.7 -0.6l-33 -0.6l-25.6 -0.8l-23.2 -1l-19.5 -1.3l-19.6 -1.8l-17 -2.3l-14.1 -2.6l-12.7 -3.2l-11 -3.6l-9.5 -4.2l-8.4 -4.9l-4.1 -2.9l-3.6 -3l-2.7 -2.6l-3.4 -3.7l-4.9 -6.7l-4.3 -7.9l-3.5 -8.5l-3.1 -11l-2.2 -11l-1.9 -13.4l-1.8 -17.1l-1.6 -22l-1.7 -30.5l-1.3 -30.5l-0.9 -32.9l-1.1 -78.1l-0.6 -123.2l-24.8 0l0 488zM693.4 359.8l93.8 0.1l0 -301.4l-387.1 0l0.1 84.2l0.6 50l1.3 36.6l0.9 14.6l1.3 13.5l1.7 13.4l2 11l2.4 9.7l2.8 8.6l3 7.3l3.9 7.3l4.1 6.1l5.3 6.1l5.3 4.9l6.9 4.9l6.5 3.6l8.4 3.7l9.7 3.4l9.8 2.5l11 2.2l13.4 2l13.4 1.4l15.9 1.3l17.1 0.9l20.7 0.8l50 0.9l75.8 0.4z"/>
<path fill="#4dffff" fill-rule="evenodd" d="M299.2 546.5l488 0l0 -55l-145.2 -0.2l-84.2 -0.7l-30.5 -0.5l-28 -0.9l-23.2 -1l-18.3 -1.2l-18.3 -1.7l-17.3 -2.2l-14.4 -2.6l-13.4 -3.3l-11.7 -3.9l-9.1 -4l-3.9 -2.1l-4.6 -2.8l-3.7 -2.6l-3.8 -3.1l-6.1 -6.1l-2.9 -3.7l-2.5 -3.7l-4.2 -7.5l-3.9 -9.5l-3.1 -11l-2.5 -12.2l-2.1 -14.7l-1.8 -17.6l-1.8 -23.8l-1.6 -28.1l-1.3 -30.5l-0.8 -30.5l-1.1 -78.1l-0.5 -123.2l-22.2 0l0 488zM597.7 356.2l67.5 0.6l122 0.2l0 -298.5l-382.1 0l0.1 75.6l0.5 47.6l1 35.4l1.6 26.8l1.2 12.2l1.5 11l1.7 9.8l1.9 8.5l2.5 8.6l2.8 7.3l2.8 6.1l3.5 6.1l4.4 6.1l4.4 4.9l5.5 4.8l6.3 4.5l6.1 3.5l7.3 3.3l8.6 3l8.5 2.5l9.8 2.1l11 1.9l12.2 1.6l13.4 1.3l14.6 1.1l17.1 0.9l42.3 1.2z"/>
<path fill="#58fff4" fill-rule="evenodd" d="M299.2 546.5l488 0l0 -54.2l-144 -0.2l-82.9 -0.6l-31.7 -0.5l-26.9 -0.8l-24.4 -1l-19.5 -1.3l-18.3 -1.6l-17.1 -2.2l-14.6 -2.5l-14.3 -3.4l-11.3 -3.7l-5.9 -2.4l-5.1 -2.4l-8.3 -4.9l-3.9 -2.9l-3.7 -3l-2.8 -2.7l-3.3 -3.6l-2.8 -3.7l-2.5 -3.7l-4.4 -8.2l-3.7 -9.3l-3 -10.5l-2.7 -13.4l-2.2 -14.7l-1.9 -18.3l-1.8 -23.2l-1.6 -26.8l-1.1 -29.3l-0.9 -30.5l-1 -78.1l-0.5 -124.4l-19.9 0l0 488zM640.8 353.7l146.4 0.4l0 -295.6l-377.4 0l0.2 76.9l0.5 47.5l1.2 35.4l0.8 14.7l1.1 13.4l1.4 12.2l1.7 11l2 9.7l2.3 8.6l3 8.5l3.2 7.3l3.4 6.1l4.3 6.1l4.3 4.9l5.2 4.9l6.1 4.4l7.3 4.2l7.3 3.4l8.6 3l9.7 2.7l11 2.4l11.7 1.8l12.7 1.6l14.6 1.3l15.9 1l39 1.5l52.5 0.7z"/>
<path fill="#63ffe9" fill-rule="evenodd" d="M299.2 546.5l488 0l0 -53.4l-148.8 -0.2l-81.8 -0.6l-32.9 -0.6l-25.6 -0.8l-22 -0.9l-20.7 -1.4l-20.7 -1.9l-15.9 -2.1l-15 -2.8l-11.9 -2.9l-11 -3.6l-5.1 -2l-5.3 -2.4l-8.5 -4.9l-4.2 -3.1l-3.8 -3l-6 -6.1l-4.6 -6.1l-3.9 -6.6l-3.7 -7.9l-3 -8.7l-2.6 -9.8l-2.2 -10.9l-1.8 -12.2l-2.6 -23.2l-2 -26.9l-1.7 -31l-1.1 -33.6l-0.8 -37.8l-0.5 -44l-0.6 -136.6l-17.7 0l0 488zM595.8 350.1l68.2 0.8l123.2 0.3l0 -292.7l-372.8 0l0.2 70.8l0.5 46.3l1 35.4l1.7 26.8l1.2 12.2l1.5 11l1.7 9.8l1.9 8.5l2.5 8.6l2.8 7.3l2.8 6.1l3.5 6.1l4.3 6.1l4.4 4.9l4.9 4.4l5.5 4.1l6.7 3.9l7.1 3.4l7.5 2.8l8.5 2.6l9.8 2.3l9.8 1.8l10.9 1.6l13.5 1.4l13.4 1.1l15.8 1l38 1.3z"/>
<path fill="#6effde" fill-rule="evenodd" d="M299.2 546.5l488 0l0 -52.6l-148.8 -0.2l-85.4 -0.7l-31.8 -0.6l-27.6 -0.8l-23.6 -1.1l-18.3 -1.3l-18.3 -1.7l-15.9 -2.1l-14.6 -2.7l-13.4 -3.3l-11 -3.7l-5.8 -2.4l-5.1 -2.4l-8.2 -4.9l-4.1 -3.1l-3.6 -3l-5.8 -6.1l-4.6 -6.1l-4.2 -7.3l-3.3 -7.4l-2.9 -8.5l-2.6 -9.8l-2.3 -11.3l-2.1 -14.3l-2.4 -21.9l-2 -25.7l-1.6 -30.5l-1.1 -32.9l-0.8 -36.6l-0.5 -46.4l-0.6 -136.6l-15.7 0l0 488zM630.2 347.6l59.4 0.5l97.6 0.1l0 -289.7l-368.3 0l0.2 73.2l0.6 46.4l1.2 35.3l0.9 14.7l1 12.2l1.4 12.2l1.7 11l2.1 9.7l2.2 8.6l2.5 7.3l3.1 7.3l3.3 6.1l4 6.1l4.9 5.8l4.9 4.7l5.5 4.1l6.7 4.2l7.3 3.5l8.6 3.3l8.5 2.5l9.8 2.3l11 2l10.9 1.5l13.5 1.4l14.6 1.1l35.4 1.7l45.5 0.9z"/>
<path fill="#79ffd2" fill-rule="evenodd" d="M299.2 546.5l488 0l0 -51.8l-147.6 -0.2l-84.2 -0.7l-31.7 -0.5l-26.9 -0.8l-21.9 -0.9l-22 -1.4l-19.5 -1.8l-15.9 -2.1l-14.6 -2.6l-13.4 -3.2l-11.1 -3.5l-6 -2.5l-5.2 -2.4l-8.4 -4.9l-3.5 -2.4l-4.5 -3.7l-6 -6.1l-4.6 -6.1l-4.4 -7.3l-3.8 -8.6l-3.3 -9.7l-2.7 -10.5l-2.4 -12.7l-1.9 -13.4l-2.2 -20.8l-2 -25.7l-1.5 -27.9l-1.1 -34.2l-0.8 -37.8l-0.5 -43.9l-0.5 -137.9l-13.9 0l0 488zM733.6 345.2l53.6 0l0 -286.7l-363.9 0l0.2 75.6l0.8 48.8l0.7 19.6l0.8 15.8l1.1 14.7l1.4 13.4l1.8 12.2l2.2 11l2.6 9.7l3 8.6l3.3 7.3l4.3 7.3l4.5 6.1l5.4 5.6l6.5 5.4l6.9 4.3l7.3 3.6l8.5 3.4l9.8 2.9l9.8 2.3l12.2 2.1l13.4 1.8l14.6 1.4l15.9 1l18.3 0.9l20.7 0.7l53.7 0.9l80.6 0.3z"/>
<path fill="#84ffc7" fill-rule="evenodd" d="M299.2 546.5l488 0l0 -51.1l-148.8 -0.2l-85.4 -0.6l-31.8 -0.6l-28 -0.8l-23.2 -1.1l-19.5 -1.3l-18.3 -1.7l-18.3 -2.4l-14.7 -2.7l-13.2 -3.4l-10.8 -3.6l-10.1 -4.6l-4.9 -2.7l-3.8 -2.5l-7.2 -5.6l-6.1 -6.3l-4.8 -6.4l-4.3 -7.3l-3.8 -8.6l-3.2 -9.7l-2.8 -11l-2.3 -12.2l-2.1 -14.6l-2.3 -21.4l-2 -26.2l-1.4 -29.3l-1.1 -31.7l-0.7 -36.6l-0.5 -45.2l-0.5 -136.6l-12.1 0l0 488zM631.2 341.5l59.6 0.6l96.4 0.1l0 -283.7l-359.6 0l0.3 68.3l0.6 45.2l1.1 34.1l0.9 14.7l1 12.2l1.3 10.9l1.6 11l1.9 9.8l2.1 8.5l2.7 8.6l3 7.3l3.1 6.1l3.9 6.1l4.9 6.1l5 4.9l5.3 4.2l6.1 3.9l7.4 3.8l7.3 2.9l8.5 2.8l9.8 2.4l9.7 2l12.2 1.8l12.2 1.4l14.7 1.2l32.9 1.8l44.1 1z"/>
<path fill="#8fffbc" fill-rule="evenodd" d="M299.2 546.5l488 0l0 -50.3l-151.3 -0.3l-85.4 -0.6l-30.5 -0.6l-26.8 -0.8l-24.4 -1l-19.2 -1.3l-18.6 -1.7l-15.9 -2.1l-14.6 -2.6l-14 -3.4l-11.7 -3.8l-5.5 -2.3l-5.1 -2.4l-8.4 -4.9l-4.1 -3l-3.8 -3.1l-6 -6.1l-4.9 -6.4l-4.7 -8.2l-3.8 -8.7l-3.6 -10.8l-2.6 -11l-2.5 -13.4l-2.2 -15.9l-2.1 -20.7l-1.7 -23.2l-1.3 -26.9l-1.1 -34.1l-0.8 -36.6l-0.4 -43.9l-0.5 -137.9l-10.5 0l0 488zM712.6 339.1l74.6 0.1l0 -280.7l-355.3 0l0.3 72l0.8 47.6l0.7 19.5l0.9 15.8l1.1 14.7l1.3 12.2l1.6 11l2.2 10.9l2.5 9.8l2.9 8.5l3.2 7.4l4.1 7.3l4.3 6.1l4.9 5.4l4.9 4.4l6.8 4.8l6.6 3.7l8.5 3.7l9.8 3.3l9.7 2.5l11 2.2l12.2 1.8l13.4 1.5l14.7 1.2l17.1 1l19.5 0.8l47.6 1l68.1 0.5z"/>
<path fill="#9bffb1" fill-rule="evenodd" d="M299.2 546.5l488 0l0 -49.6l-152.5 -0.3l-83 -0.6l-32.9 -0.6l-25.6 -0.7l-23.2 -1l-20.7 -1.3l-20.8 -2l-15.8 -2.1l-15.4 -2.8l-12.7 -3.2l-11 -3.6l-9.7 -4.2l-8.6 -4.9l-4.9 -3.5l-3.6 -3l-6.1 -6.2l-5.2 -6.8l-4.6 -7.8l-4 -9.3l-3.3 -10l-2.9 -11.9l-2.5 -13.4l-2.2 -15.9l-2.2 -21.4l-1.7 -23.7l-1.3 -28.1l-1 -31.7l-0.8 -37.8l-0.4 -42.7l-0.5 -137.9l-8.9 0l0 488zM640.5 335.4l57.6 0.6l89.1 0.1l0 -277.6l-351 0l0.3 67.1l0.6 43.9l1.3 33l0.9 14.6l1.1 12.2l1.3 11l1.8 11l2 9.7l2.3 8.6l2.5 7.3l3.1 7.3l3.3 6.1l4.1 6.1l4.3 5.2l4.9 4.8l6 4.6l6.2 3.9l7.1 3.5l7.5 2.9l8.6 2.7l9.7 2.4l9.8 1.9l12.2 1.8l12.2 1.4l14.6 1.2l33 1.7l43.6 1z"/>
<path fill="#a6ffa6" fill-rule="evenodd" d="M299.2 546.5l488 0l0 -49l-152.5 -0.2l-85.4 -0.6l-31.7 -0.6l-28.1 -0.8l-23.2 -1.1l-19.5 -1.2l-17.1 -1.6l-17.2 -2.2l-14.5 -2.6l-14.4 -3.5l-11.2 -3.7l-5.8 -2.4l-5.1 -2.5l-8.3 -4.9l-4 -2.8l-3.9 -3.3l-6 -6.1l-3 -3.6l-2.9 -4.3l-4.4 -7.9l-4.1 -9.8l-3.5 -11l-2.7 -11.7l-2.4 -13.9l-2.3 -17.1l-2 -21.9l-1.7 -24.4l-1.3 -28.1l-0.8 -30.5l-0.7 -35.4l-0.4 -45.1l-0.4 -134.2l-7.5 0l0 488zM747.8 333l39.4 0l0 -274.5l-346.8 0l0.4 70.8l0.9 46.3l0.7 18.3l0.9 15.9l1.2 14.6l1.5 12.2l1.9 12.2l2.1 9.8l2.7 9.7l3.2 8.6l3.4 7.3l4.5 7.3l4.8 6.1l5.1 5l6.1 4.9l7.3 4.5l7.3 3.6l8.5 3.2l9.8 2.9l9.8 2.2l12.2 2.1l13.4 1.8l14.6 1.4l15.9 1l18.3 0.9l20.7 0.7l52.5 0.8l77.7 0.4z"/>
<path fill="#b1ff9b" fill-rule="evenodd" d="M299.2 546.5l488 0l0 -48.3l-152.5 -0.2l-84.2 -0.6l-32.9 -0.6l-26.9 -0.8l-23.1 -1l-20.8 -1.3l-20.7 -1.9l-17.1 -2.4l-14.6 -2.7l-13.5 -3.4l-11.2 -3.9l-5.7 -2.4l-4.9 -2.5l-8.1 -4.9l-4.2 -3.1l-3.4 -3l-5.9 -6.1l-5.4 -7.3l-4.7 -8.5l-4.1 -9.8l-3.4 -11l-2.8 -12.2l-2.5 -14.6l-2.2 -17.1l-1.9 -20.7l-1.6 -23.2l-1.2 -26.8l-1 -34.2l-0.6 -35.4l-0.4 -45.1l-0.4 -133l-6.1 0l0 488zM660 329.3l51.6 0.4l75.6 0.2l0 -271.4l-342.5 0l0.3 63.4l0.7 44l1.4 32.9l1 14.6l1.2 12.2l1.4 11l1.9 11l1.8 8.5l2.5 8.6l2.6 7.3l3.3 7.3l3.5 6.4l4.2 5.8l5.5 6.1l5 4.4l5.8 4.2l6.4 3.6l7.3 3.4l7.5 2.7l8.4 2.5l10.6 2.4l10.1 1.8l12.2 1.7l13.4 1.3l14.7 1.1l35.3 1.7l47.3 0.9z"/>
<path fill="#bcff8f" fill-rule="evenodd" d="M299.2 546.5l488 0l0 -47.6l-153.7 -0.2l-85.4 -0.7l-31.7 -0.5l-28.1 -0.8l-23.2 -1.1l-19.5 -1.2l-18.3 -1.7l-17.6 -2.3l-14.1 -2.5l-14.6 -3.6l-11 -3.7l-5.9 -2.4l-5.1 -2.5l-8.3 -4.8l-3.9 -2.9l-3.9 -3.2l-6 -6.1l-3 -3.7l-3 -4.3l-4.4 -7.9l-4.2 -9.8l-3.6 -11.4l-3 -13l-2.7 -15.8l-2.1 -17.1l-1.9 -20.7l-1.6 -23.2l-1.2 -26.9l-0.9 -32.9l-1 -80.5l-0.4 -133l-4.7 0l0 488zM636 325.7l58.5 0.7l92.7 0.3l0 -268.2l-338.3 0l0.3 61l0.8 42.7l1.2 31.7l0.9 13.4l1.1 12.2l1.4 11l1.7 11l1.7 8.5l2.3 8.6l2.4 7.3l3 7.3l3.1 6.1l3.6 5.8l4 5.2l4.7 4.9l5.8 4.9l5.5 3.6l6.7 3.7l6.3 2.8l8.5 3l8.6 2.4l9.7 2.2l9.8 1.7l11 1.5l13.4 1.4l14.6 1.1l15.9 0.9l39.1 1.3z"/>
<path fill="#c7ff84" fill-rule="evenodd" d="M299.2 546.5l488 0l0 -47l-153.7 -0.2l-85.4 -0.6l-33 -0.6l-26.8 -0.8l-23.2 -1l-20.7 -1.3l-19.5 -1.8l-17.1 -2.3l-15.9 -3l-12.2 -3.1l-5.7 -1.7l-6.5 -2.4l-9.7 -4.4l-4.9 -2.8l-4.2 -2.6l-3.3 -2.5l-4.3 -3.6l-3.7 -3.7l-2.8 -3.2l-3.2 -4.1l-2.4 -3.7l-4.6 -8.5l-2.1 -4.9l-2.3 -6.1l-3.5 -12.2l-2.7 -12.3l-2.4 -15l-2.3 -19.1l-1.8 -20.7l-1.4 -23.2l-1.1 -26.8l-0.8 -30.5l-1 -80.5l-0.4 -131.8l-3.4 0l0 488zM703.6 323.2l83.6 0.3l0 -265l-334 0l0.4 63.4l0.9 44l1.5 32.9l1.1 13.4l1.4 12.2l1.7 11.9l2.1 10.1l2.2 8.5l2.8 8.6l3.1 7.3l3.3 6.2l3.8 6l5.1 6.1l5.1 4.9l6.4 4.8l6.4 3.8l7.4 3.6l8.5 3.2l8.5 2.5l11 2.5l11 1.9l12.2 1.6l13.4 1.4l15.8 1.2l17.1 0.8l41.5 1.3l56.7 0.6z"/>
<path fill="#d2ff79" fill-rule="evenodd" d="M299.2 546.5l488 0l0 -46.3l-153.7 -0.3l-86.6 -0.6l-31.8 -0.5l-29.2 -0.9l-23.2 -1l-19.5 -1.3l-18.3 -1.7l-17.6 -2.3l-14.2 -2.6l-14.3 -3.5l-11.3 -3.8l-5.6 -2.3l-5.1 -2.4l-8.3 -4.9l-4.2 -3.1l-3.7 -3l-3.8 -3.7l-3.2 -3.6l-5.3 -7.4l-4.8 -8.5l-2.3 -5.4l-2.1 -5.6l-3.6 -12.2l-3 -13.4l-2.5 -15.9l-2.3 -18.8l-1.5 -17.8l-1.3 -19.5l-1 -20.7l-0.8 -25.6l-0.8 -37.9l-0.5 -46.3l-0.4 -145.2l-2.2 0l0 488zM668.4 319.6l49.3 0.4l69.5 0.2l0 -261.7l-329.7 0l0.4 59.8l0.8 41.5l1.4 31.7l1 13.4l1.2 12.2l1.5 11l1.7 9.7l2.1 9.3l2.4 8.5l2.4 6.7l3.3 7.3l3.5 6.1l4.3 6.1l4.3 4.8l5.4 5l6.1 4.5l6.9 4l7.7 3.5l7.3 2.6l8.6 2.5l9.7 2.3l11 1.9l11 1.5l13.4 1.4l14.7 1.2l34.1 1.6l44.7 1z"/>
<path fill="#deff6e" fill-rule="evenodd" d="M299.2 546.5l488 0l0 -45.7l-153.7 -0.2l-85.4 -0.6l-33 -0.6l-26.8 -0.7l-23.2 -1l-21.9 -1.4l-20.8 -1.9l-17.1 -2.3l-15.5 -2.9l-12.5 -3.2l-12.1 -4.2l-9.9 -4.5l-4.9 -2.7l-3.8 -2.5l-3.5 -2.6l-4.2 -3.5l-3.7 -3.7l-3.1 -3.5l-5.3 -7.5l-4.7 -8.5l-2.2 -5l-2.2 -6l-3.6 -12.2l-2.9 -13.4l-2.5 -15.9l-2.3 -19.5l-1.6 -18.3l-1.3 -21.9l-1 -23.2l-0.9 -28.1l-0.6 -36.6l-0.4 -45.1l-0.4 -139.1l-1 0l0 488zM653.5 315.9l53.2 0.7l80.5 0.3l0 -258.4l-325.4 0l0.4 57.3l0.8 40.3l1.4 31.7l2.1 24.4l1.4 11l1.6 9.8l1.8 8.5l2.4 8.5l2.5 7.4l3.1 7.3l3.3 6.1l4.1 6.1l4 4.9l4.9 4.8l6.1 4.8l6 3.8l6.2 3.1l7.3 3.1l8.6 2.8l8.5 2.2l9.8 2l11 1.8l10.9 1.4l13.5 1.2l30.5 1.9l39.5 1.2z"/>
<path fill="#e9ff63" fill-rule="evenodd" d="M299.2 546.5l488 0l0 -45.1l-148.8 -0.2l-85.4 -0.6l-58.6 -1.1l-23.2 -0.9l-20.7 -1.1l-19.5 -1.6l-17.2 -1.9l-15.8 -2.4l-12.2 -2.5l-13 -3.6l-10 -3.7l-9.9 -4.7l-8.1 -5l-4.1 -3.1l-3.4 -3l-3.7 -3.7l-2.7 -3.1l-3.1 -4.2l-2.4 -3.7l-4.6 -8.5l-3.9 -9.8l-3.4 -10.9l-3.3 -14.7l-2.4 -14.6l-2.1 -17.1l-1.7 -18.3l-1.5 -22l-1.1 -25.6l-0.9 -29.3l-0.6 -31.7l-0.7 -90.9l0 388.6zM787 313.5l0.2 0l0 -255l-321 0l0.5 63.4l1 42.7l0.9 17.1l1.1 15.9l1.4 13.4l1.7 12.2l2 11l2.5 9.7l2.7 8.6l3.6 8.5l4 7.3l4.2 6.1l5 5.8l5.9 5.2l6.3 4.5l7.3 4.1l7.4 3.2l8.5 3l9.8 2.6l11 2.3l12.2 1.9l14.6 1.7l14.6 1.3l17.1 1l40.3 1.4l53.7 0.8l81.5 0.3z"/>
<path fill="#f4ff58" fill-rule="evenodd" d="M299.2 546.5l488 0l0 -44.5l-141.5 -0.2l-81.8 -0.4l-57.3 -0.9l-42.7 -1.6l-19.5 -1.2l-15.1 -1.2l-15.4 -1.7l-13.4 -2l-12.5 -2.4l-10.7 -2.7l-10.7 -3.4l-8.9 -3.7l-8.5 -4.4l-7.3 -4.9l-6.3 -5.3l-5.9 -6.5l-5 -6.9l-4.6 -8.6l-3.6 -8.5l-3.2 -9.8l-3.1 -12.2l-2.5 -13.3l-2.2 -16l-1.7 -15.8l-1.6 -19.5l-1.3 -22l-0.9 -24.4l-0.8 -28.3l0 272.3zM726.4 309.8l60.8 0.2l0 -251.5l-316.6 0l0.4 58.6l1.1 41.4l0.7 17.1l1 14.7l1.1 12.2l1.5 12.2l1.8 10.9l2.1 9.8l2.4 8.5l3.1 8.6l3.3 7.3l3.6 6.1l4.4 6.1l4.6 5.2l5.2 4.6l5.8 4.1l7.3 4.2l7.3 3.3l8.4 3l8.7 2.4l11 2.4l11 1.9l12.2 1.6l13.4 1.3l15.9 1.1l17 0.8l42.7 1.3l58.8 0.6z"/>
<path fill="#ffff4d" fill-rule="evenodd" d="M299.2 546.5l488 0l0 -43.9l-134.2 -0.2l-80.5 -0.4l-56.1 -0.7l-44 -1.3l-20 -1.1l-16.9 -1.2l-14.3 -1.4l-14.6 -1.8l-12.2 -2.1l-11 -2.3l-9.8 -2.6l-9.7 -3.3l-8.6 -3.7l-8.5 -4.6l-7.2 -5l-5.5 -4.9l-5.6 -6.1l-4.9 -7l-4.2 -7.7l-3.7 -8.5l-3.3 -9.8l-2.8 -10.9l-2.4 -12.2l-2.3 -14.7l-1.8 -15.8l-1.5 -17.1l-1.3 -19.5l-1.1 -23.7l0 233.5zM711.1 306.2l76.1 0.3l0 -248l-312.2 0l0.5 56.1l1 40.3l1.7 30.5l1.2 13.4l1.3 11l1.8 11l2 9.7l2.3 8.6l2.7 8l3.5 7.8l3.3 6.1l4.2 6.1l4.1 4.9l5.7 5.3l5.9 4.5l6.3 3.7l7.3 3.5l7.3 2.8l8.5 2.7l9.8 2.3l10.9 2l11.1 1.6l13.4 1.5l14.6 1.2l15.9 0.9l37.8 1.4l52 0.8z"/>
<path fill="#fff44d" fill-rule="evenodd" d="M299.2 546.5l488 0l0 -43.4l-134.2 -0.1l-79.3 -0.4l-56.1 -0.7l-41.5 -1.2l-18.3 -0.8l-17.1 -1.1l-15.8 -1.4l-14.7 -1.7l-12.2 -1.9l-11.5 -2.2l-10 -2.4l-9 -2.8l-8.8 -3.3l-8.3 -4l-7.5 -4.6l-6.4 -4.9l-5.6 -5.3l-4.9 -5.9l-4.7 -7.1l-3.8 -7.3l-3.5 -8.5l-3.1 -9.8l-2.7 -11l-2.4 -12.2l-2 -13.4l-1.9 -17.1l-1.5 -16.5l-1.2 -18.9l0 209.9zM708 302.5l79.2 0.4l0 -244.4l-307.7 0l0.6 54.9l1 39l1.7 30.5l1.2 13.5l1.4 10.9l1.8 11l2.1 9.8l2.4 8.5l2.6 7.3l3.2 7.4l3.3 6.1l4.2 6.1l4.1 4.8l5.1 4.9l5.8 4.4l6.1 3.8l7.3 3.6l7.4 2.9l8.5 2.7l8.5 2.1l11 2.2l11 1.7l12.2 1.4l13.4 1.2l15.9 1l36.6 1.4l50.1 0.9z"/>
<path fill="#ffe94d" fill-rule="evenodd" d="M299.2 546.5l488 0l0 -42.8l-131.8 -0.1l-79.3 -0.4l-54.9 -0.6l-43.9 -1.2l-19.5 -0.9l-17.1 -1.1l-14.6 -1.3l-13.4 -1.4l-12.2 -1.8l-11.8 -2.1l-10.2 -2.3l-8.5 -2.4l-9.8 -3.5l-8.5 -3.8l-6.8 -3.8l-6.7 -4.7l-5.9 -5.1l-5 -5.5l-4.9 -6.6l-3.7 -6.2l-3.5 -7.3l-3.2 -8.6l-2.9 -9.7l-2.6 -11l-2.2 -12.2l-1.9 -13.4l-1.7 -15.9l-1.5 -17.4l0 193.1zM713.1 298.8l74.1 0.4l0 -240.7l-303.1 0l0.6 53.7l1 37.8l1.7 29.3l1.1 12.2l1.5 12.2l1.8 11l2.1 9.7l2.4 8.6l2.6 7.3l3.2 7.3l3.4 6.1l4.1 6.1l4.3 5l5 4.8l6 4.5l6.5 4l6.9 3.4l7.3 2.8l8.6 2.7l8.5 2.1l11 2.2l11 1.6l12.2 1.4l13.4 1.2l15.9 1.1l36.6 1.4l50.3 0.8z"/>
<path fill="#ffde4d" fill-rule="evenodd" d="M299.2 546.5l488 0l0 -42.2l-207.4 -0.5l-54.9 -0.6l-41.5 -1l-36.6 -1.8l-15.8 -1.2l-13.5 -1.3l-12.2 -1.5l-12.2 -2l-9.7 -2l-9.8 -2.5l-10.1 -3.2l-8.2 -3.3l-7.3 -3.6l-6.7 -4.1l-6.4 -4.8l-5.2 -4.9l-5.3 -6.1l-4.5 -6.7l-3.6 -6.7l-3.7 -8.5l-2.9 -8.6l-2.6 -9.8l-2.4 -11l-2 -12.2l-2 -14.6l-1.5 -15.3l0 180zM727 295.2l60.2 0.3l0 -237l-298.4 0l0.6 53.7l1.1 37.8l0.9 15.9l0.9 13.4l1.3 12.2l1.4 11l1.8 10.3l2.1 9.2l2.5 8.5l2.8 7.5l3.2 7.2l3.6 6.1l4.4 6.1l4.6 5.1l5.2 4.6l5.8 4.2l6.1 3.6l7.3 3.4l8.6 3.2l8.5 2.4l9.8 2.3l10.9 1.9l11 1.6l13.4 1.4l14.7 1.1l15.8 0.9l37.9 1.3l52 0.8z"/>
<path fill="#ffd24d" fill-rule="evenodd" d="M299.2 546.5l488 0l0 -41.7l-205 -0.4l-54.6 -0.6l-43 -1l-34.1 -1.6l-15.9 -1.1l-13.5 -1.2l-13.3 -1.6l-12.2 -1.8l-9.8 -1.8l-9.7 -2.3l-9.8 -2.9l-8.3 -3l-8.1 -3.7l-6.8 -3.8l-6.8 -4.7l-5.6 -4.9l-4.7 -4.9l-4.8 -6.4l-4.3 -7l-3.5 -7.3l-3.2 -8.5l-2.7 -8.6l-2.3 -9.7l-2.3 -11.8l-2 -12.6l-1.7 -14.5l0 169.4zM757.3 291.5l29.9 0.1l0 -233.1l-293.6 0l0.6 53.7l1.2 37.8l1 15.9l1 13.4l1.4 12.2l1.6 11l1.9 9.7l2.4 9.8l2.8 8.5l3 7.3l3.4 6.6l3.7 5.7l4.8 6l4.9 5l6.1 4.8l5.8 3.7l7.2 3.6l7.8 3.2l8.5 2.7l9.8 2.5l11 2.1l10.9 1.7l12.2 1.4l14.7 1.2l32.9 1.8l42.7 1.1l60.4 0.6z"/>
<path fill="#ffc74d" fill-rule="evenodd" d="M299.2 546.5l488 0l0 -41.2l-200.1 -0.3l-56.1 -0.6l-42.7 -0.9l-35.4 -1.5l-29.3 -2.2l-13.4 -1.5l-12.2 -1.7l-9.7 -1.8l-9.8 -2.1l-9.8 -2.6l-9.7 -3.4l-8.5 -3.6l-6.2 -3.3l-6.3 -4.1l-6.1 -4.8l-5 -4.9l-5 -6.1l-4.1 -6.1l-3.9 -7.3l-3.1 -7.4l-2.9 -8.5l-2.7 -9.8l-2.3 -10.9l-1.9 -11l-1.8 -12.9l0 160.5zM683.8 286.6l43.6 0.7l59.8 0.4l0 -229.2l-288.8 0l0.6 47.6l1.1 35.4l1.7 28l1.1 12.2l1.3 9.7l1.5 9.8l1.8 8.6l2.2 8.5l2.3 7.3l2.4 6.1l3.2 6.6l3.3 5.6l4 5.6l3.7 4.2l5.3 4.9l4.8 3.6l5.9 3.7l5.9 3l7.3 3.1l8.6 2.8l8.5 2.3l9.8 2l9.7 1.7l11 1.4l12.2 1.2l29.3 2l36.9 1.2z"/>
<path fill="#ffbc4d" fill-rule="evenodd" d="M299.2 546.5l488 0l0 -40.6l-201.3 -0.4l-53.7 -0.5l-42.7 -0.9l-36 -1.5l-28.6 -2.1l-13.5 -1.4l-10.3 -1.4l-10.4 -1.7l-9.8 -2l-9.6 -2.4l-8.7 -2.7l-8.7 -3.4l-7.6 -3.7l-6.8 -4l-6.1 -4.5l-5.5 -4.9l-4.4 -4.9l-4.5 -6.1l-3.9 -6.5l-3.7 -7.6l-3 -7.8l-3 -9.8l-2.3 -9.7l-2.1 -11l-1.8 -11.5l0 153zM707.3 283l79.9 0.7l0 -225.2l-283.8 0l0.6 47.6l1.1 34.1l1.8 28.1l1.2 11l1.4 11l1.7 9.7l1.9 8.6l2.4 8.5l2.5 7.3l3.2 7.3l3.4 6.1l4 5.9l3.6 4.5l4.9 4.8l4.9 4l6.1 4l6.1 3.3l7.3 3.2l7.3 2.5l8.6 2.4l9.7 2.2l11 1.9l11 1.5l12.2 1.3l13.4 1l31.7 1.6l40.9 1.1z"/>
<path fill="#ffb14d" fill-rule="evenodd" d="M299.2 546.5l488 0l0 -40.1l-197.6 -0.4l-56.2 -0.5l-41.4 -0.8l-35.4 -1.4l-28.8 -1.9l-12.7 -1.3l-12.2 -1.5l-11 -1.7l-9.7 -1.9l-9.8 -2.4l-9.8 -2.9l-7.9 -3l-7.9 -3.6l-6.5 -3.7l-6.9 -4.9l-4.9 -4.2l-4.9 -5.1l-4.9 -6.4l-3.6 -5.8l-3.4 -6.5l-3 -7.4l-2.9 -8.5l-2.3 -8.5l-2.2 -9.8l-2.1 -12.2l0 146.4zM753.9 279.3l33.3 0.2l0 -221l-278.8 0l0.7 47.6l1.3 35.4l0.9 14.6l1.2 13.4l1.4 12.1l1.6 9.9l1.9 9.7l2.2 8.6l2.7 8.5l3.1 7.3l3.2 6.3l3.7 5.9l4.8 6l5 5l6 4.8l5.9 3.8l6.3 3.2l7.3 3.1l8.5 2.9l8.6 2.2l9.7 2.1l11 1.8l12.2 1.6l13.4 1.2l30.5 1.9l39.1 1.2l53.3 0.7z"/>
<path fill="#ffa64d" fill-rule="evenodd" d="M299.2 546.5l488 0l0 -39.6l-198.9 -0.4l-53.6 -0.5l-42.7 -0.8l-36.6 -1.4l-28.1 -1.9l-13.4 -1.3l-11 -1.4l-9.9 -1.5l-9.6 -1.8l-9.8 -2.3l-9.7 -2.8l-8.2 -2.9l-7.7 -3.3l-7.3 -4l-5.5 -3.6l-5.5 -4.4l-4.9 -4.7l-4.7 -5.6l-3.8 -5.4l-3.9 -6.8l-3.3 -7.3l-2.7 -7.3l-2.6 -8.6l-2.4 -9.7l-2.2 -11.3l0 140.6zM709.2 274.4l78 0.8l0 -216.7l-273.6 0l0.8 45.1l1.2 33l1.9 26.8l1.2 11l1.4 9.8l1.8 9.7l2 8.6l2.2 7.5l2.6 7.1l2.7 6.1l3.3 6.1l4.2 6.1l4.1 4.9l5 4.9l5 3.9l6.1 3.9l5.9 3.1l6.3 2.8l7.3 2.6l8.5 2.4l8.6 2l9.7 1.7l11 1.6l12.2 1.4l12.2 1l30.5 1.7l37.9 1.1z"/>
<path fill="#ff9b4d" fill-rule="evenodd" d="M299.2 546.5l488 0l0 -39.1l-196.4 -0.3l-54.9 -0.5l-41.5 -0.8l-36.6 -1.3l-29.1 -1.9l-23.4 -2.5l-10.9 -1.6l-9.8 -1.7l-11 -2.5l-8.5 -2.3l-8.3 -2.8l-7.6 -3.2l-7.3 -3.7l-6.1 -3.9l-5.2 -3.9l-5.4 -4.9l-4.4 -4.8l-4.5 -6.1l-3.7 -6.2l-3.5 -7.3l-2.6 -6.4l-2.7 -8.2l-2.2 -8.5l-2.4 -11l0 135.4zM777.3 270.8l9.9 0l0 -212.3l-268.2 0l0.8 45.1l1.4 34.2l1 14.6l1.2 12.2l1.5 11.8l1.7 10.2l2.2 9.8l2.4 8.5l2.6 7.3l3.3 7.3l3.7 6.6l3.9 5.6l4.6 5.3l4.9 4.5l6.1 4.6l6.1 3.7l7.3 3.5l7.3 2.8l8.6 2.6l9.2 2.3l10.3 2l11.3 1.7l11.9 1.3l13.4 1.2l15.8 1.1l17.1 0.7l41.5 1.2l57.2 0.6z"/>
<path fill="#ff8f4d" fill-rule="evenodd" d="M299.2 546.5l488 0l0 -38.6l-197.6 -0.3l-53.7 -0.5l-41.5 -0.8l-35.4 -1.2l-28 -1.8l-24.4 -2.4l-11 -1.6l-9.6 -1.6l-11.2 -2.4l-8.5 -2.3l-8.2 -2.6l-7.7 -3l-6.4 -3.1l-6.4 -3.7l-5.5 -3.7l-6.1 -5.2l-4.8 -5.1l-4.3 -5.5l-4 -6.1l-3.2 -6.1l-3.1 -7.3l-2.6 -7.3l-2.5 -8.6l-2.3 -10l0 130.8zM741.9 265.9l45.3 0.4l0 -207.8l-262.7 0l0.8 42.7l1.4 32.9l0.9 13.5l1.2 12.2l1.4 10.9l1.6 9.8l1.8 8.5l2.2 8.6l2.5 7.6l2.9 7l3.2 6.3l3.7 5.8l3.8 5l4.6 4.9l5 4.3l6 4.2l6.2 3.5l6.1 2.8l7.3 2.8l8.6 2.6l8.5 2.1l9.8 1.9l9.7 1.5l12.2 1.4l13.4 1.3l14.7 1l34.1 1.4l43.8 0.9z"/>
<path fill="#ff844d" fill-rule="evenodd" d="M299.2 546.5l488 0l0 -38.1l-194 -0.3l-54.9 -0.5l-40.2 -0.7l-36.6 -1.2l-29.3 -1.7l-24.4 -2.4l-19.5 -2.9l-11.3 -2.2l-9.5 -2.4l-8.1 -2.5l-7.7 -2.9l-7 -3.2l-6.7 -3.7l-5.9 -3.9l-5.6 -4.6l-4.9 -4.9l-4.1 -4.9l-4.2 -6.1l-3.4 -6.1l-3.3 -7.3l-2.5 -6.6l-2.5 -8l-2.4 -9.5l0 126.6zM732.8 261l54.4 0.6l0 -203.1l-257.1 0l0.9 41.5l1.3 30.5l2.1 24.4l1.4 11l1.6 9.7l1.7 8.6l2.2 8.5l2.4 7.3l3 7.3l3.1 6.1l3.8 6.1l3.8 4.9l4.1 4.5l4.5 4.1l5.3 3.8l6.1 3.7l7.1 3.4l7.5 3l7.3 2.3l8.1 2.1l9 1.8l9.8 1.6l10.9 1.5l12.2 1.2l13.5 1.1l30.5 1.5l39.5 1z"/>
<path fill="#ff794d" fill-rule="evenodd" d="M299.2 546.5l488 0l0 -37.6l-191.5 -0.3l-54.9 -0.5l-41.5 -0.7l-36.6 -1.1l-28.1 -1.6l-24.4 -2.2l-11 -1.4l-10.9 -1.8l-8.6 -1.6l-10.3 -2.4l-8.4 -2.5l-8.1 -2.9l-7.4 -3.2l-7 -3.6l-5.7 -3.7l-5.5 -4.3l-4.9 -4.6l-4.9 -5.5l-3.7 -5.1l-3.6 -6.1l-3.6 -7.3l-2.5 -6.4l-2.5 -7.4l-2.4 -9l0 122.8zM735.3 256.1l51.9 0.6l0 -198.2l-251.3 0l0.9 39l1.5 30.5l1 13.5l1.1 10.9l1.3 9.8l1.7 9.8l1.8 8.5l2.3 8.5l2.5 7.4l2.5 6.1l3.1 6.1l3.8 6.1l3.7 4.8l4.5 4.9l4.9 4.2l4.9 3.6l6.1 3.6l6.1 3l6.7 2.7l7.9 2.6l8.5 2.2l8.6 1.8l9.7 1.7l11 1.5l24.4 2.2l30.5 1.6l38.4 1z"/>
<path fill="#ff6e4d" fill-rule="evenodd" d="M299.2 546.5l488 0l0 -37.1l-192.8 -0.4l-52.4 -0.4l-42.7 -0.7l-36.6 -1.1l-29.3 -1.7l-24.4 -2.2l-19.6 -2.8l-9.7 -1.8l-8.5 -1.9l-8.6 -2.4l-8.5 -2.9l-7.8 -3.2l-6.8 -3.4l-6.1 -3.8l-5.2 -3.7l-5.5 -4.9l-4.5 -4.9l-3.8 -4.9l-3.9 -6.1l-3.2 -6.1l-3.1 -7.3l-2.6 -7.3l-2.4 -8.3l0 119.3zM747.9 251.3l39.3 0.4l0 -193.2l-245.2 0l0.9 37.8l1.5 29.4l1.1 13.3l1.2 11l1.4 9.8l1.7 9.7l2 8.6l2.4 8.2l2.4 6.8l3.1 6.9l3 5.6l3.7 5.5l3.9 4.8l4.6 4.7l4.6 3.8l5.2 3.7l6.1 3.4l6.1 2.9l7.3 2.8l7.3 2.3l8.6 2.1l9.7 2l9.8 1.6l11 1.3l25.6 2.3l31.7 1.5l40 1z"/>
<path fill="#ff634d" fill-rule="evenodd" d="M299.2 546.5l488 0l0 -36.7l-191.5 -0.3l-53.7 -0.4l-41.5 -0.7l-34.2 -1l-30.5 -1.6l-23.3 -2l-10.8 -1.3l-11 -1.6l-11 -2l-9.7 -2.2l-8.6 -2.4l-7.3 -2.4l-7.3 -3l-7 -3.4l-6.2 -3.7l-5.1 -3.6l-4.9 -4.2l-4.9 -4.9l-3.6 -4.5l-4.1 -5.9l-3.4 -6.1l-3.4 -7.4l-2.6 -6.9l-2.4 -7.8l0 116zM777.1 246.4l10.1 0.1l0 -188l-239 0l1.1 37.8l1.6 28.1l1.1 12.2l1.2 11l1.5 9.7l1.9 9.9l2.1 8.4l2.7 8.6l2.9 7.3l3 6.1l3.7 6.1l3.6 4.9l4.4 4.8l4.5 4.1l4.8 3.7l6.1 3.8l6.2 3.1l7.3 3l7.3 2.4l8.5 2.3l9.3 2l10.2 1.8l11 1.5l12.2 1.2l28.1 2l35.4 1.3l47.2 0.8z"/>
<path fill="#ff584d" fill-rule="evenodd" d="M299.2 546.5l488 0l0 -36.2l-194 -0.3l-52.4 -0.4l-41.5 -0.7l-35.4 -1.1l-29 -1.6l-24.7 -2.1l-19.5 -2.6l-9.8 -1.7l-9.5 -2.1l-9.1 -2.4l-7.5 -2.5l-6.8 -2.6l-7.4 -3.5l-6.5 -3.6l-5.3 -3.7l-5.2 -4.3l-4.4 -4.2l-4.2 -4.9l-3.6 -5.1l-3.5 -5.9l-3 -6.1l-3 -7.3l-2.7 -8.1l0 113zM740.1 240.3l47.1 0.7l0 -182.5l-232.4 0l1 34.2l1.5 26.8l2.3 22l1.4 9.7l1.6 8.6l1.7 7.3l2.1 7.4l2.4 7l2.7 6.3l3.2 6.1l3.1 4.9l3.7 4.9l4.5 4.9l4.8 4.2l4.9 3.6l5.1 3.1l5.8 3l6.1 2.6l7.4 2.6l7.3 2l8.5 2l9.8 1.9l9.7 1.4l22 2.3l28.1 1.8l34.6 1.2z"/>
<path fill="#ff4d4d" fill-rule="evenodd" d="M299.2 546.5l488 0l0 -35.8l-189.1 -0.3l-54.9 -0.3l-40.3 -0.7l-35.3 -1l-29.3 -1.4l-24.1 -2l-21.1 -2.6l-9.7 -1.6l-9.8 -2l-9.3 -2.3l-8 -2.5l-7.1 -2.6l-7.8 -3.5l-6.7 -3.6l-5 -3.3l-5.2 -4l-5.2 -4.9l-4.2 -4.8l-3.7 -5l-3.7 -5.8l-3.2 -6.4l-2.9 -6.8l-2.4 -7l0 110.2zM729.9 234.2l25.6 0.6l31.7 0.5l0 -176.8l-225.7 0l1.1 31.7l1.5 24.4l2.2 22l1.3 8.5l1.6 8.6l1.6 7.3l2.1 7.3l2.5 7.3l2.6 6.1l3 6l3.1 5l3 4.1l3.9 4.4l3.8 3.7l4.5 3.7l5.3 3.6l5.7 3.2l6.1 2.9l6.1 2.3l7.3 2.4l7.3 1.9l8.6 1.8l8.5 1.5l20.8 2.7l24.4 1.9l30.5 1.4z"/>
<path fill="#f44d4d" fill-rule="evenodd" d="M299.2 546.5l488 0l0 -35.3l-189.1 -0.3l-53.7 -0.4l-41.7 -0.6l-36.4 -1l-27.9 -1.4l-24.5 -2l-20.8 -2.5l-9.8 -1.6l-10.9 -2.3l-8.5 -2.1l-7.4 -2.2l-7.3 -2.7l-6.8 -2.9l-7 -3.7l-5.7 -3.6l-5 -3.7l-5.3 -4.9l-4.3 -4.7l-3.7 -4.8l-3.3 -5.1l-3.3 -6.1l-3.2 -7.1l-2.4 -6.6l0 107.6zM781.3 229.3l5.9 0.1l0 -170.9l-218.6 0l1.2 31.7l1.8 25.6l1.2 11l1.3 9.8l1.7 9.7l1.9 8.6l2.1 7.4l2.5 7.2l2.5 6.1l3.5 6.8l3.5 5.4l3.8 4.9l4.6 4.9l4.1 3.6l5 3.7l5.9 3.5l6.1 3.1l6.1 2.5l7.3 2.5l8.5 2.3l8.6 1.9l9.7 1.7l11 1.5l11 1.3l25.6 1.9l31.7 1.3l40.5 0.9z"/>
<path fill="#e94d4d" fill-rule="evenodd" d="M299.2 546.5l488 0l0 -34.9l-189.1 -0.2l-52.5 -0.4l-41.4 -0.6l-35.4 -1l-29.3 -1.4l-23.2 -1.8l-21.9 -2.5l-9.8 -1.6l-10.3 -2l-10.1 -2.4l-7.7 -2.3l-7.3 -2.6l-7.3 -3.1l-5.8 -3l-6 -3.6l-5.1 -3.7l-5.1 -4.4l-3.9 -4.1l-4 -4.9l-3.4 -4.9l-3.5 -6.1l-3.4 -7.3l-2.5 -6.4l0 105.2zM739.2 222l48 1.1l0 -164.6l-211.2 0l1.2 28.1l1.7 23.1l2.3 19.6l3 15.8l1.8 7.3l2.2 7.4l2.3 6.1l2.7 5.9l2.8 5l3.1 4.9l3.8 4.9l3.4 3.7l4 3.7l4.6 3.6l5.2 3.3l5 2.8l5.9 2.7l6.1 2.3l7.2 2.3l7.5 1.9l7.9 1.8l9.2 1.6l19.5 2.5l23.2 1.8l27.6 1.4z"/>
<path fill="#de4d4d" fill-rule="evenodd" d="M299.2 546.5l488 0l0 -34.4l-187.9 -0.3l-53.7 -0.4l-41.4 -0.6l-34.7 -0.9l-28.8 -1.3l-25.6 -2l-20.7 -2.4l-10.4 -1.6l-9.2 -1.8l-8.5 -2l-8.5 -2.4l-7.4 -2.4l-7.3 -3l-6.2 -3.1l-6.3 -3.6l-5.2 -3.7l-4.4 -3.6l-5 -4.9l-4.1 -4.9l-3.4 -4.9l-3.7 -6.1l-2.9 -6.1l-2.7 -6.5l0 102.9zM757.9 215.9l29.3 0.6l0 -158l-203.3 0l1.3 28.1l1.8 21.9l2.5 18.3l1.6 8.6l1.6 7.3l2.1 7.3l2.1 6.1l2.5 6.1l3 6.1l3 5l3.4 4.8l3.9 4.5l3.7 3.6l3.7 3.1l4.8 3.4l4.9 3l6.3 3.1l5.9 2.4l7.1 2.5l7.6 2.1l7.3 1.7l8.5 1.6l9.8 1.6l20.7 2.3l24.6 1.7l30.3 1.2z"/>
<path fill="#d24d4d" fill-rule="evenodd" d="M299.2 546.5l488 0l0 -34l-186.7 -0.3l-53.6 -0.3l-41.5 -0.6l-35.4 -0.9l-29.3 -1.4l-23.2 -1.7l-21 -2.3l-10.7 -1.6l-9.7 -1.8l-8.6 -1.9l-8.5 -2.3l-8.6 -2.8l-7.3 -2.9l-6.1 -2.9l-5.7 -3.3l-5.5 -3.7l-4.6 -3.6l-4.9 -4.7l-3.7 -4.2l-3.6 -4.8l-3.7 -5.8l-3.2 -6.1l-2.9 -6.8l0 100.7zM751.2 208.6l36 1l0 -151.1l-195.1 0l1.4 25.6l1.9 20.8l2.4 17l3.1 14.7l2.1 7.2l2.1 6.2l2.6 6.1l2.4 4.9l2.9 4.9l3.4 4.8l3.1 3.7l3.5 3.7l4.4 3.8l4.7 3.5l5 3l4.9 2.6l6.1 2.7l6.1 2.2l6.1 1.9l7.3 1.9l15.9 3.1l18.3 2.4l23.2 2l26.2 1.4z"/>
<path fill="#c74d4d" fill-rule="evenodd" d="M299.2 546.5l488 0l0 -33.6l-187.9 -0.2l-52.4 -0.4l-41.5 -0.6l-34.2 -0.8l-29.3 -1.3l-25.6 -1.9l-20.7 -2.3l-10.7 -1.6l-10.1 -1.9l-8.5 -1.9l-8.5 -2.3l-7.4 -2.4l-6.3 -2.5l-5.9 -2.7l-6.2 -3.4l-5.7 -3.6l-4.8 -3.7l-4 -3.7l-4.9 -5.2l-3.6 -4.7l-3.7 -5.6l-3.4 -6.4l-2.7 -5.9l0 98.6zM756.9 201.2l30.3 1l0 -143.7l-186.3 0l1.4 23.2l2 19.5l2.6 17.1l1.6 7.3l1.8 7.1l2 6.3l2.2 6.1l2.2 4.9l2.5 4.9l3 4.9l2.7 3.8l3.7 4.3l4.1 4.1l4.4 3.6l3.7 2.7l4.9 3l5.6 2.9l5.6 2.4l5.9 2.1l6.1 1.9l7.3 1.9l15.8 3.1l18.3 2.4l22 1.9l24.6 1.3z"/>
<path fill="#bc4d4d" fill-rule="evenodd" d="M299.2 546.5l488 0l0 -33.1l-185.4 -0.3l-53.7 -0.3l-40.3 -0.6l-36.6 -0.9l-28 -1.2l-23.2 -1.6l-22 -2.3l-9.7 -1.3l-11 -1.9l-8.6 -1.8l-8.7 -2.3l-7.9 -2.4l-6.6 -2.5l-6 -2.6l-6.8 -3.5l-5.9 -3.6l-4.9 -3.7l-4.4 -3.8l-4.5 -4.7l-4 -4.9l-3.7 -5.5l-3.1 -5.5l-3 -6.4l0 96.7zM774.7 193.9l12.5 0.4l0 -135.8l-177 0l1.6 22l2.3 19.5l2.9 15.8l1.7 7.4l1.8 6.1l2.2 6.1l2.2 5.4l2.8 5.5l2.9 4.9l2.9 4.1l3.6 4.5l3.6 3.6l3.8 3.3l3.7 2.8l4.8 3.2l5.4 2.9l5.4 2.5l6.3 2.4l6.1 2l13.4 3.3l15.9 2.8l19.5 2.3l23.2 1.8l26.5 1.2z"/>
<path fill="#b14d4d" fill-rule="evenodd" d="M299.2 546.5l488 0l0 -32.7l-190.3 -0.3l-51.3 -0.3l-43.9 -0.6l-41.5 -1.2l-24.4 -1.3l-18.3 -1.3l-21.9 -2.4l-8.6 -1.2l-13.4 -2.4l-6.1 -1.4l-9.6 -2.5l-7.5 -2.4l-6.5 -2.5l-5.7 -2.5l-6.1 -3.1l-6.1 -3.8l-4.8 -3.7l-4.6 -3.9l-4 -4.2l-3.6 -4.4l-3.7 -5.3l-3.3 -5.7l-2.8 -5.7l0 94.8zM774.7 185.4l12.5 0.4l0 -127.3l-166.9 0l1.8 20.7l2.2 17.1l3 14.7l3.5 12.2l2.2 6.1l2.2 4.8l2.5 4.9l3 4.9l2.6 3.7l3.6 4.2l3.7 3.7l3.4 3l3.9 3l4.9 3.1l4.5 2.5l5.2 2.4l11 4.1l6.9 2l6.5 1.6l15.9 2.9l17.1 2.2l20.7 1.8l24.1 1.3z"/>
</g>
<path d="M299.5 58.5V545.5" fill="none" stroke="#262626" stroke-opacity="0.3" stroke-width="1"/>
<path d="M421.5 58.5V545.5M543.5 58.5V545.5M665.5 58.5V545.5M299.5 424.5H787.5M299.5 302.5H787.5M299.5 180.5H787.5" fill="none" stroke="#262626" stroke-opacity="0.08" stroke-width="1"/>
<path d="M421.5 541V546M543.5 541V546M665.5 541V546M299.5 424.5H304.5M299.5 302.5H304.5M299.5 180.5H304.5" fill="none" stroke="#262626" stroke-opacity="0.3" stroke-width="1"/>
<g fill="none" stroke-width="0.9">
<path stroke="#cf0000" d="M787.2 512.2l-186.7 -0.3l-53.6 -0.3l-41.5 -0.6l-36.6 -1l-28.5 -1.3l-24 -1.8l-20.7 -2.4l-11 -1.7l-8.5 -1.6l-9.8 -2.2l-8.5 -2.4l-7.7 -2.6l-7 -2.8l-6.6 -3.3l-5.6 -3.2l-5.8 -4.1l-4.5 -3.6l-4.3 -4.3l-3.7 -4.3l-3.6 -4.9l-3.8 -6.1l-3 -6.1l-3 -7M586.3 58.5l1.4 28.1l1.9 21.9l1.2 9.8l1.6 9.7l1.7 8.6l1.8 7.3l2.3 7.3l2.3 6.3l2.7 5.9l3.4 6.1l3.3 4.9l4 4.9l3.7 3.9l4.9 4.1l4.9 3.5l5.2 3.1l5.8 2.9l6.1 2.5l7.3 2.5l7.3 2l8.5 2l8.6 1.6l9.7 1.4l11 1.3l24.4 2.1l29.3 1.4l36.6 0.9"/>
<path stroke="#ff3000" d="M787.2 509.7l-191.5 -0.3l-54.9 -0.5l-40.3 -0.6l-35.4 -1.1l-29.3 -1.6l-23.1 -2l-11 -1.3l-11 -1.6l-10.1 -1.8l-10.6 -2.4l-8.8 -2.5l-7.2 -2.4l-7.2 -2.9l-6.5 -3.2l-6.2 -3.7l-5.6 -3.9l-5.3 -4.6l-4.5 -4.6l-4.1 -5.2l-3.3 -4.8l-3.6 -6.4l-3.2 -7.1l-2.9 -7.7l-2.4 -8M546.3 58.5l1 39l1.7 29.3l1.2 13.4l1.4 11l1.5 9.8l2 9.7l2.2 8.6l2.4 7.3l3 7.3l3.1 6.1l3.8 6.1l4.1 5.3l4.9 5.1l4.9 4.2l5.3 3.7l6.4 3.7l6.6 3l7.3 2.7l8.5 2.6l8.6 2.1l9.7 1.9l11 1.6l12.2 1.5l12.2 1l29.3 1.8l37.8 1.2l48.8 0.6"/>
<path stroke="#ff8000" d="M787.2 506.9l-198.9 -0.3l-53.6 -0.5l-42.7 -0.9l-36.6 -1.4l-28.1 -1.9l-13.4 -1.3l-11 -1.3l-10.2 -1.6l-9.3 -1.8l-8.6 -1.9l-9.7 -2.7l-8.6 -3l-7.3 -3.1l-6.5 -3.4l-6.9 -4.3l-5.4 -4.2l-5.6 -5.3l-4.8 -5.7l-3.7 -5.3l-3.9 -6.9l-3.4 -7.3l-2.7 -7.3l-2.6 -8.6l-2.4 -9.7l-2.1 -10.9M514.1 58.5l0.7 47.6l1.5 35.4l1 14.6l1.3 13.4l1.4 11.1l1.9 10.9l2.2 9.7l2.5 8.6l2.6 7.3l3.4 7.3l3.5 6.1l4.4 6.1l4.4 4.9l5.6 5.1l6.1 4.4l7 3.9l7.7 3.4l7.3 2.7l8.5 2.5l9.8 2.2l11 1.9l12.2 1.7l13.4 1.4l13.4 1l34.2 1.7l45.1 1l61 0.5"/>
<path stroke="#ffdf00" d="M787.2 504l-130.5 -0.2l-76.9 -0.3l-57.3 -0.7l-41.5 -1l-35.4 -1.8l-14.6 -1.1l-14.7 -1.5l-12.2 -1.6l-11 -1.8l-11.5 -2.4l-9.3 -2.4l-8.4 -2.8l-8.6 -3.4l-7.3 -3.7l-7.6 -4.8l-6.1 -4.9l-5.8 -5.7l-4.9 -6.1l-4.1 -6.5l-3.8 -7.3l-3.4 -8.5l-3.1 -9.8l-2.4 -9.7l-2.4 -12.2l-1.9 -12.2l-1.9 -15.9l-1.4 -15.8M486.3 58.5l0.6 56.1l1.3 40.3l0.9 15.8l1.1 14.7l1.5 13.4l1.7 11l2.2 10.9l2.5 9.1l3.2 9.3l3.2 7.3l4.2 7.3l4 5.5l5 5.5l5.5 4.9l6.6 4.5l7.2 4l7.4 3.2l8.4 2.9l9 2.4l10.7 2.3l11 1.8l13.4 1.7l14.6 1.3l15.9 1.1l37.8 1.4l50 0.9l72 0.4"/>
<path stroke="#bfff40" d="M787.2 500.7l-153.7 -0.2l-85.4 -0.6l-33 -0.6l-26.8 -0.7l-23.2 -1l-21.9 -1.4l-20.8 -1.9l-17.1 -2.3l-15 -2.8l-13 -3.4l-11.7 -4l-5.7 -2.4l-4.6 -2.2l-8.4 -5.1l-3.8 -2.8l-3.9 -3.3l-3.8 -3.7l-3.2 -3.6l-2.8 -3.7l-3.2 -4.9l-2.7 -4.9l-2.3 -4.8l-3.7 -9.8l-3.5 -12.2l-2.8 -13.4l-2.5 -15.9l-2.2 -19.5l-1.7 -20.7l-1.4 -23.2l-1 -25.6l-0.8 -30.5l-0.9 -79.3l-0.4 -131.8M461.2 58.5l0.5 64.7l1 43.9l0.8 17.1l1.1 15.8l1.3 13.4l1.7 12.2l2.2 12.2l2.4 9.8l2.7 8.5l3.6 8.6l3.9 7.3l4.2 6.1l5.3 6.1l5.5 4.9l6.8 4.8l6.6 3.7l8 3.5l8.5 3l9.8 2.6l11 2.3l13.2 2l13.6 1.6l14.7 1.2l17 1.1l41.5 1.4l54.9 0.7l84.2 0.3"/>
<path stroke="#70ff8f" d="M787.2 497l-151.3 -0.2l-84.2 -0.6l-32.9 -0.6l-26.8 -0.8l-23.2 -1l-20.8 -1.3l-20.7 -2l-15.9 -2.2l-15.2 -2.8l-12.8 -3.3l-11.9 -4l-5.6 -2.5l-4.5 -2.2l-8.4 -5.1l-3.8 -2.8l-3.8 -3.3l-3.6 -3.6l-3.2 -3.7l-5.1 -7.3l-2.7 -4.9l-2.3 -4.8l-3.7 -9.8l-3.4 -12.2l-2.8 -13.5l-2.5 -17l-2.3 -20.7l-1.6 -20.8l-1.4 -24.4l-1 -26.9l-0.8 -31.7l-0.9 -76.8l-0.3 -125.7M437.2 58.5l0.4 73.2l0.9 47.6l0.8 19.5l1 15.9l1.3 14.6l1.5 12.2l2.1 12.2l2.2 9.8l2.9 9.7l3.4 8.6l4.1 7.7l4.6 6.9l5.2 5.9l5.6 5.1l6.6 4.6l7 3.9l8.4 3.7l9 3l10.9 2.8l11 2.1l13.4 2l14.7 1.5l15.8 1.2l17.1 1l43.9 1.3l59.8 0.6l96.4 0.3"/>
<path stroke="#10ffef" d="M787.2 492.9l-147.6 -0.3l-84.2 -0.6l-31.7 -0.6l-28.1 -0.9l-23.2 -1l-18.3 -1.3l-18.3 -1.7l-16.7 -2.2l-15 -2.8l-13.3 -3.3l-11.1 -3.8l-5.5 -2.3l-5 -2.5l-8 -4.8l-3.4 -2.5l-4.3 -3.6l-5.7 -6.1l-2.8 -3.7l-2.5 -3.7l-2.1 -3.6l-2.4 -4.9l-3.7 -9.8l-3.4 -12.2l-2.4 -12.2l-2.2 -15.8l-1.9 -18.3l-1.8 -23.2l-1.4 -25l-1.2 -29.9l-0.8 -30.5l-1.1 -78.1l-0.4 -123.2M412.8 58.5l0.2 83l0.8 50l0.6 19.5l0.9 17.1l1.2 14.6l1.5 13.4l1.9 12.2l2.3 11l2.8 9.8l3.5 9.1l4.1 8l4.5 6.7l4.8 5.7l6.4 5.9l7 4.8l7.4 4.1l8.5 3.6l9.8 3.1l11 2.7l12.2 2.2l13.4 1.8l15.8 1.6l17.1 1.1l18.3 0.9l46.4 1.1l63.4 0.6l108.6 0.1"/>
<path stroke="#00bfff" d="M787.2 488l-142.7 -0.3l-83 -0.7l-30.5 -0.5l-28.1 -0.9l-23.1 -1.1l-18.3 -1.3l-17.1 -1.6l-17.1 -2.3l-14.6 -2.7l-13 -3.3l-10.7 -3.7l-5.7 -2.4l-4.8 -2.4l-7.9 -4.9l-6.7 -5.5l-5.2 -5.5l-4.4 -6.1l-3.3 -6.1l-3.1 -7.3l-2.3 -7.9l-2 -9.2l-1.6 -11l-1.1 -12.2l-0.9 -14.6l-0.8 -20.8l-2.2 -70.8l-1.2 -49.9l-1 -75.7l-0.5 -98.8M383.1 58.5l0 96.4l0.5 52.4l0.5 19.6l0.8 17l1.2 15.9l1.3 12.2l1.9 12.2l2.3 11l3.3 11l3.4 8.5l3.8 7.3l5 7.3l5.4 6.1l6.3 5.6l7.3 4.9l7.9 4.2l9 3.6l9.9 3.1l11 2.6l13.4 2.3l14.7 1.9l15.8 1.4l17.1 1.1l19.5 0.8l48.8 1l68.3 0.5l125.7 0"/>
<path stroke="#0060ff" d="M787.2 482l-158.6 -0.4l-48.8 -0.4l-39 -0.7l-32.1 -1.1l-27.7 -1.5l-24.1 -2.2l-18.6 -2.5l-9.8 -1.7l-8.3 -1.9l-8.9 -2.4l-7.2 -2.4l-6 -2.5l-6.2 -3l-5.1 -3.1l-4.9 -3.6l-4 -3.7l-3.3 -3.7l-3.4 -4.8l-2.6 -4.9l-1.9 -4.9l-1.7 -6.1l-0.9 -6.1l-0.2 -6.1l0.6 -8.5l1.4 -7.4l2.1 -6.1l1.8 -3.6l1.4 -2.3l2 -2.6l1.6 -1.6l3.7 -2.7l2.4 -1.2l2.5 -0.8l2.4 -0.5l3.7 -0.5l4.9 -0.1l7.3 0.5l34.1 4.1l23.2 2.2l24.4 1.5l29.3 1l35.4 0.6l47.6 0.3l191.5 0.1"/>
<path stroke="#0000ff" d="M787.2 474.1l-135.4 -0.3l-79.3 -0.9l-30.5 -0.8l-28.1 -1.2l-19.5 -1.3l-19.5 -1.8l-18.3 -2.5l-15.3 -3l-12.8 -3.6l-9.2 -3.7l-4.8 -2.4l-3.9 -2.5l-3.2 -2.4l-3.7 -3.7l-2 -2.4l-2.1 -3.7l-1.2 -3.6l-0.5 -3.7l0.1 -2.4l0.5 -2.5l0.9 -2.4l1.4 -2.5l1.9 -2.4l2.6 -2.4l4.9 -3.2l3.7 -1.7l3.4 -1.2l7.6 -2l9.8 -1.7l13.3 -1.3l13.5 -0.8l17 -0.6l52.5 -0.7l102.5 -0.6l153.7 -0.3"/>
<path stroke="#0000af" d="M787.2 461l-93.9 -0.3l-64.7 -0.7l-47.6 -1.2l-32.9 -1.6l-13.6 -1l-14.5 -1.4l-14.6 -2.1l-8.6 -1.8l-7.3 -2l-6 -2.4l-2.1 -1.3l-1.5 -1.2l-1.1 -1.2l-0.5 -1.2l0 -1.2l0.5 -1.3l1.1 -1.2l1.7 -1.2l2.3 -1.2l5.6 -2l6.9 -1.7l7.8 -1.3l10.9 -1.4l12.2 -1.1l16.1 -1.1l35.2 -1.3l50 -1l64.7 -0.6l93.9 -0.3"/>
</g>
<path d="M787.2 517.2l-322.1 0l-4.9 -4.9l-63.4 0l-4.9 -4.8l-19.5 0l-4.9 -4.9l-14.6 0l-4.9 -4.9l-9.8 0l-9.7 -9.8l-4.9 0l-24.4 -24.4l0 -4.8M645.7 58.5l0 24.4l4.9 4.9l0 14.6l4.8 4.9l0 4.9l4.9 4.9l0 4.8l4.9 4.9l0 4.9l9.8 9.8l4.8 0l4.9 4.8l4.9 0l4.9 4.9l4.9 0l4.8 4.9l14.7 0l4.9 4.9l34.1 0l4.9 4.9l24.4 0" fill="none" stroke="#971c1c" stroke-width="1"/>
<path d="M299.2 545.5H787.2M645.7 58.5H787.2M299.2 546.5V458.7M787.2 546.5V517.2M787.2 165.9V58.5" fill="none" stroke="#a02a2a" stroke-width="1"/>
<path d="M738.5 469.8 720.5 459.4 672.1 430.3 647 415.5 633.7 407.9 620.8 400.8 608.5 394.3 596.6 388.3 585.4 382.9 574.7 378.1 564.6 373.9 555 370.3 546 367.3 537.5 364.8 529.5 362.9 521.9 361.6 518.3 361.1 511.5 360.5 508.2 360.4 501.9 360.5 499 360.8 493.3 361.6 490.6 362.2 485.5 363.8 483.1 364.7 478.6 366.9 476.4 368.2 472.4 371 468.7 374.3 467 376.1 463.8 380 462.4 382.1 459.8 386.7 458.7 389.2 456.7 394.4 455.8 397.1 454.5 403 453.9 406.1 453.2 412.6 452.8 419.4 452.8 426.6 453.3 437.8 454.9 456.4 455.4 462.6 455.5 468 455.4 470.4 455.1 474.6 454.3 478.2 453.7 479.7 453.1 481 452.4 482.2 451.5 483.2 450.6 484 449.5 484.7 448.4 485.2 447.2 485.6 445.9 485.9 443 486 441.4 485.9 438.1 485.3 434.5 484.3 430.7 483 426.9 481.4 423 479.6 417.2 476.7 412.9 474.3 402.8 468.4 391 460.8 381.1 454.1 367 444 356.7 436 347.8 428.7 343 424.5 339 420.7 335.8 417.4 333.2 414.5 330 410.3 328.5 407.7 327.6 405.3 327.4 404.1 327.4 403.1 327.5 402.1 327.9 401.2 328.4 400.3 329.2 399.6 330.1 398.9 331.3 398.3 332.7 397.7 334.3 397.3 338.1 396.6 342.9 396.2 348.6 396.2 351.9 396.4 359.3 396.9 367.9 397.8 382.3 399.8 397.7 402.6 414.2 406.1 431.5 410.4 443.5 413.6 456 417.3 475.3 423.4 502.3 432.6 562 454 578.4 459.5 593.4 464.2 607.2 467.9 615.7 469.9 619.8 470.7 627.7 472 631.4 472.4 638.6 472.9 642 473 648.5 472.8 651.6 472.4 657.6 471.4 660.4 470.6 665.7 468.7 668.3 467.6 673.2 464.9 677.9 461.6 680.2 459.7 684.7 455.7 689.2 451 702.8 435.9 707.5 431.1 712.5 426.5 717.8 422.2 723.4 418.2 729.4 414.7 732.6 413.2 739.3 410.3 746.5 408 754.1 406.2 758.1 405.5 766.5 404.5 770.9 404.2 780.1 404 787.3 404.2" fill="none" stroke="#000" stroke-width="4" stroke-linejoin="round" stroke-linecap="butt"/>
</svg>
<div class="t" style="left:290.16px;top:551.90px;font-size:12px;line-height:17px;color:#262626;font-family:'Liberation Sans',sans-serif;letter-spacing:0.000px;will-change:transform;">0.5</div>
<div class="t" style="left:417.16px;top:551.90px;font-size:12px;line-height:17px;color:#262626;font-family:'Liberation Sans',sans-serif;letter-spacing:0.000px;will-change:transform;">1</div>
<div class="t" style="left:534.16px;top:551.90px;font-size:12px;line-height:17px;color:#262626;font-family:'Liberation Sans',sans-serif;letter-spacing:0.000px;will-change:transform;">1.5</div>
<div class="t" style="left:661.16px;top:551.90px;font-size:12px;line-height:17px;color:#262626;font-family:'Liberation Sans',sans-serif;letter-spacing:0.000px;will-change:transform;">2</div>
<div class="t" style="left:778.16px;top:551.90px;font-size:12px;line-height:17px;color:#262626;font-family:'Liberation Sans',sans-serif;letter-spacing:0.000px;will-change:transform;">2.5</div>
<div class="t" style="left:277.32px;top:539.90px;font-size:12px;line-height:17px;color:#262626;font-family:'Liberation Sans',sans-serif;letter-spacing:0.000px;will-change:transform;">0.5</div>
<div class="t" style="left:287.33px;top:417.90px;font-size:12px;line-height:17px;color:#262626;font-family:'Liberation Sans',sans-serif;letter-spacing:0.000px;will-change:transform;">1</div>
<div class="t" style="left:277.32px;top:295.90px;font-size:12px;line-height:17px;color:#262626;font-family:'Liberation Sans',sans-serif;letter-spacing:0.000px;will-change:transform;">1.5</div>
<div class="t" style="left:287.33px;top:173.90px;font-size:12px;line-height:17px;color:#262626;font-family:'Liberation Sans',sans-serif;letter-spacing:0.000px;will-change:transform;">2</div>
<div class="t" style="left:277.32px;top:51.90px;font-size:12px;line-height:17px;color:#262626;font-family:'Liberation Sans',sans-serif;letter-spacing:0.000px;will-change:transform;">2.5</div>
<div class="t" style="left:476.96px;top:565.20px;font-size:14.5px;line-height:20px;color:#262626;font-family:'Liberation Serif',serif;letter-spacing:0.000px;will-change:transform;">A-B bond distance (Å)</div>
<div class="t" style="left:265.2px;top:302px;width:0;height:0;"><div style="position:absolute;white-space:nowrap;transform:translate(-50%,-50%) rotate(-90deg);font-family:'Liberation Serif',serif;font-size:14.5px;line-height:20px;color:#262626;word-spacing:0.8px;will-change:transform">B-C bond distance (Å)</div></div>
<svg class="ab" style="left:790px;top:29px" width="10" height="8" viewBox="0 0 10 8"><path d="M1.6 1.6 L6.6 5.6 M3.4 5.9 H7.2 V2.4" stroke="#000" stroke-width="1.5" fill="none"/></svg>
<div class="ab" style="left:0;top:583px;width:800px;height:1px;background:#f8f8f8"></div><div class="ab" style="left:0;top:584px;width:800px;height:1px;background:#4f87c7"></div>
</body></html>
